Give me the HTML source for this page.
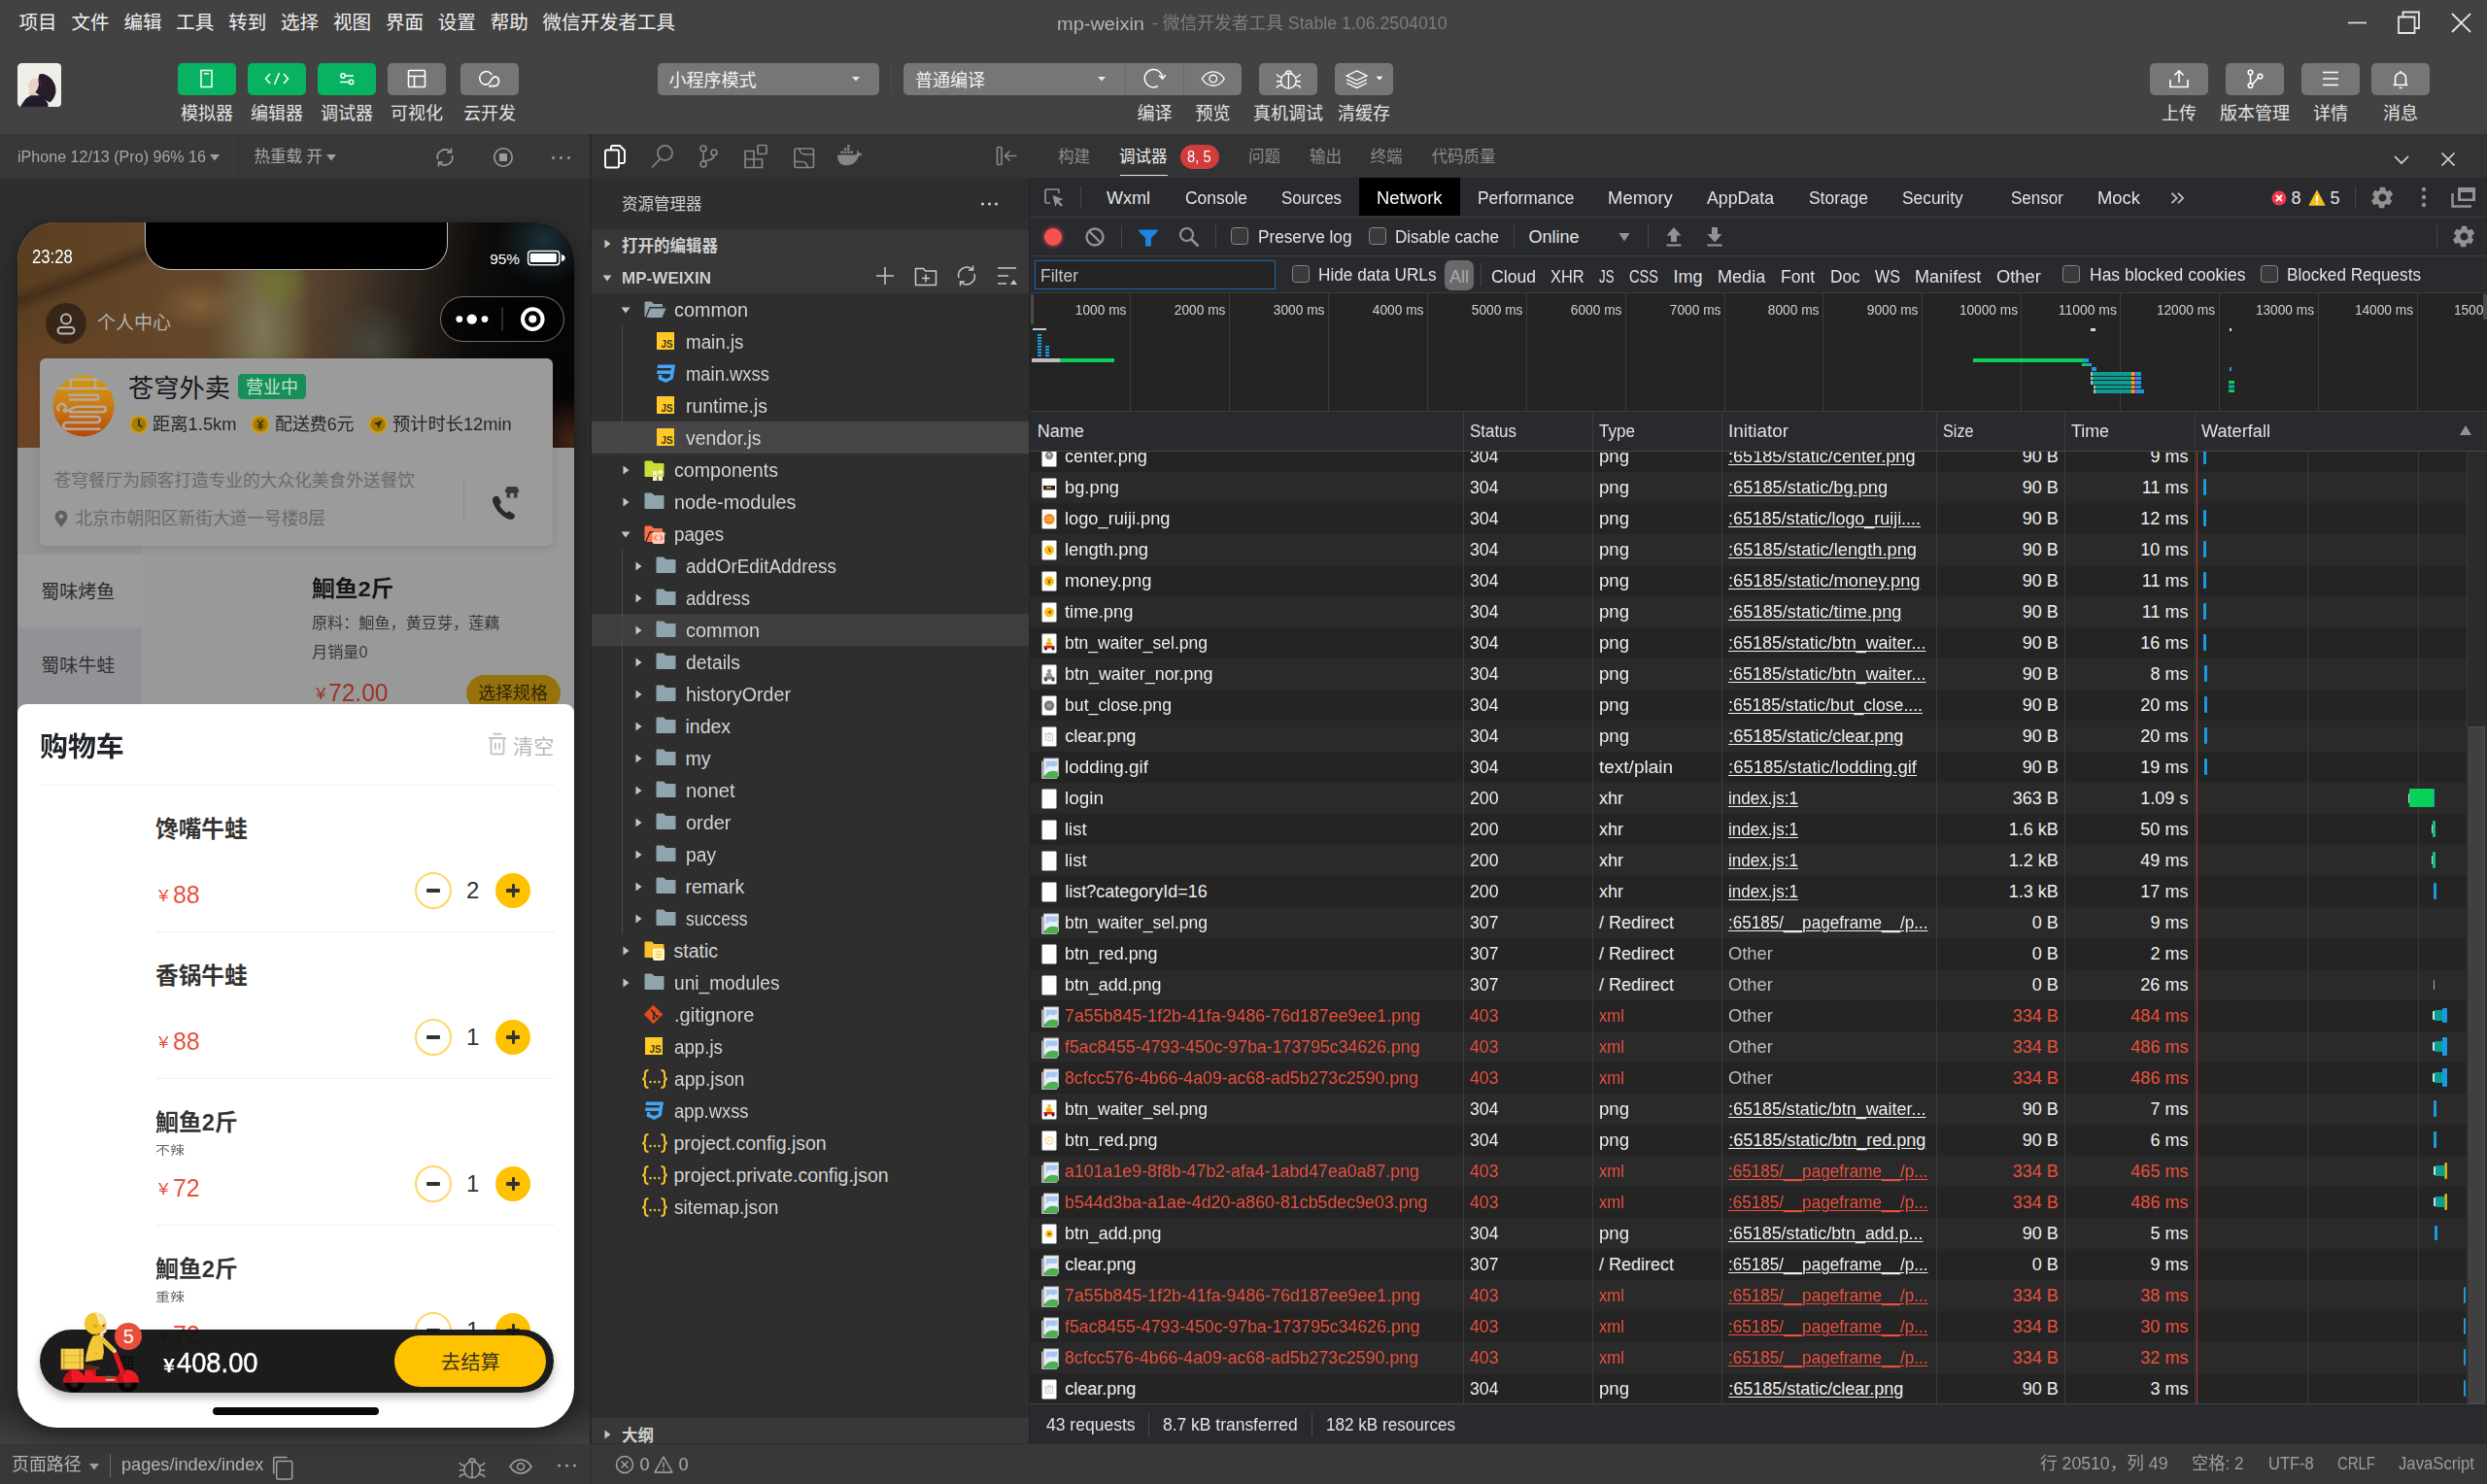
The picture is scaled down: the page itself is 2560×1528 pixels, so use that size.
<!DOCTYPE html>
<html lang="zh-CN"><head><meta charset="utf-8"><title>mp-weixin - 微信开发者工具</title>
<style>
html,body{margin:0;padding:0;background:#2e2e2e;}
body{width:2560px;height:1528px;overflow:hidden;font-family:"Liberation Sans","Noto Sans CJK SC",sans-serif;}
#app{position:relative;width:2560px;height:1528px;overflow:hidden;background:#2e2e2e;}
#app div,#app span.t,#app svg{position:absolute;box-sizing:border-box;}
span.t{white-space:pre;display:block;}
.clip{overflow:hidden;}
</style></head><body><div id="app">
<div style="left:0px;top:0px;width:2560px;height:138px;background:#424242;"></div>
<div style="left:0px;top:138px;width:2560px;height:46px;background:#383838;"></div>
<span class="t" style="left:19.60px;top:10.30px;font-size:19.5px;line-height:27px;color:#f0f0f0;">项目</span>
<span class="t" style="left:73.50px;top:10.30px;font-size:19.5px;line-height:27px;color:#f0f0f0;">文件</span>
<span class="t" style="left:127.40px;top:10.30px;font-size:19.5px;line-height:27px;color:#f0f0f0;">编辑</span>
<span class="t" style="left:181.30px;top:10.30px;font-size:19.5px;line-height:27px;color:#f0f0f0;">工具</span>
<span class="t" style="left:235.20px;top:10.30px;font-size:19.5px;line-height:27px;color:#f0f0f0;">转到</span>
<span class="t" style="left:289.10px;top:10.30px;font-size:19.5px;line-height:27px;color:#f0f0f0;">选择</span>
<span class="t" style="left:343.00px;top:10.30px;font-size:19.5px;line-height:27px;color:#f0f0f0;">视图</span>
<span class="t" style="left:396.90px;top:10.30px;font-size:19.5px;line-height:27px;color:#f0f0f0;">界面</span>
<span class="t" style="left:450.80px;top:10.30px;font-size:19.5px;line-height:27px;color:#f0f0f0;">设置</span>
<span class="t" style="left:504.70px;top:10.30px;font-size:19.5px;line-height:27px;color:#f0f0f0;">帮助</span>
<span class="t" style="left:558.60px;top:10.30px;font-size:19.5px;line-height:27px;color:#f0f0f0;">微信开发者工具</span>
<span class="t" style="left:1087.50px;top:11.80px;font-size:18.3px;line-height:26px;color:#b4b4b4;transform:scaleX(1.0936);transform-origin:0 50%;">mp-weixin</span>
<span class="t" style="left:1185.50px;top:12.10px;font-size:18px;line-height:25px;color:#7d7d7d;transform:scaleX(0.9849);transform-origin:0 50%;">- 微信开发者工具 Stable 1.06.2504010</span>
<svg style="left:2414px;top:10px;" width="26" height="26" viewBox="0 0 26 26"><path d="M3 13.5H22" stroke="#e6e6e6" stroke-width="1.6" fill="none"/></svg>
<svg style="left:2464px;top:8px;" width="30" height="30" viewBox="0 0 30 30"><path d="M5 9.5h16.5v16.5H5z M9.5 9V4.5h16.5v16.5H22" stroke="#e6e6e6" stroke-width="1.8" fill="none"/></svg>
<svg style="left:2520px;top:10px;" width="28" height="28" viewBox="0 0 28 28"><path d="M4 4L23 23M23 4L4 23" stroke="#e6e6e6" stroke-width="1.8" fill="none"/></svg>
<svg style="left:18px;top:64.700px" width="45.300" height="45.300" viewBox="0 0 45.300 45.300"><defs><clipPath id="avc"><rect width="45.300" height="45.300" rx="4.600"/></clipPath><filter id="avb" x="-10%" y="-10%" width="120%" height="120%"><feGaussianBlur stdDeviation="0.700"/></filter></defs>
<g clip-path="url(#avc)"><rect width="45.300" height="45.300" fill="#efefe9"/><g filter="url(#avb)">
<path d="M13.500 17.500c2-2 5-2.500 8.500-1l1 8-3 6.500-5 3-2.500-1.500-1-4 0.500-3-1.500-3z" fill="#ecd2ca"/>
<path d="M12.500 30l7 1-1 4-6-0.500z" fill="#e6c9c0"/>
<path d="M22.500 11.500c3-1.500 7 0 10.500 3 4 3.500 6.500 8 6.500 13.500 0 5-2.500 9.500-6 12.500l-4-2-8-6-3-2.500c1.500-2 3-5 3.500-8l-0.500-4.500c0-2 0.500-4.500 1-6z" fill="#251d2b"/>
<path d="M3 45.300c1.500-3.500 4-7 6.500-9.500l4.500-2.500h10c3 2 6 5.500 7.500 9v3z" fill="#211e2c"/>
<path d="M22 17c1.500 2 2.500 5 2 8" stroke="#4a2a3a" stroke-width="1.200" fill="none"/></g></g></svg>
<div style="left:183px;top:65px;width:60px;height:32.5px;background:#07b261;border-radius:5px;"></div>
<svg style="left:183px;top:65px;" width="60" height="32.5" viewBox="0 0 60 32.5"><rect x="24" y="7.5" width="11" height="17" stroke="#fff" fill="none" stroke-width="1.5"/><path d="M27 10.8h5" stroke="#fff" fill="none" stroke-width="1.5"/></svg>
<span class="t" style="left:186.00px;top:104.50px;font-size:18px;line-height:25px;color:#e4e4e4;">模拟器</span>
<div style="left:255px;top:65px;width:60px;height:32.5px;background:#07b261;border-radius:5px;"></div>
<svg style="left:255px;top:65px;" width="60" height="32.5" viewBox="0 0 60 32.5"><path d="M23 11l-4.5 5 4.5 5M37 11l4.500 5-4.5 5M32.500 10l-5 12" stroke="#fff" fill="none" stroke-width="1.5"/></svg>
<span class="t" style="left:258.00px;top:104.50px;font-size:18px;line-height:25px;color:#e4e4e4;">编辑器</span>
<div style="left:327px;top:65px;width:60px;height:32.5px;background:#07b261;border-radius:5px;"></div>
<svg style="left:327px;top:65px;" width="60" height="32.5" viewBox="0 0 60 32.5"><circle cx="26" cy="13" r="2.200" stroke="#fff" fill="none" stroke-width="1.5"/><path d="M28.500 13H37M23 19.500h9" stroke="#fff" fill="none" stroke-width="1.5"/><circle cx="34.5" cy="19.500" r="2.200" stroke="#fff" fill="none" stroke-width="1.5"/></svg>
<span class="t" style="left:330.00px;top:104.50px;font-size:18px;line-height:25px;color:#e4e4e4;">调试器</span>
<div style="left:399px;top:65px;width:60px;height:32.5px;background:#767676;border-radius:5px;"></div>
<svg style="left:399px;top:65px;" width="60" height="32.5" viewBox="0 0 60 32.5"><rect x="21.5" y="7.500" width="17" height="17" rx="1" stroke="#fff" fill="none" stroke-width="1.6"/><path d="M21.500 13.500h17M27.500 13.500v11" stroke="#fff" fill="none" stroke-width="1.6"/></svg>
<span class="t" style="left:402.00px;top:104.50px;font-size:18px;line-height:25px;color:#e4e4e4;">可视化</span>
<div style="left:474px;top:65px;width:60px;height:32.5px;background:#767676;border-radius:5px;"></div>
<svg style="left:474px;top:65px;" width="60" height="32.5" viewBox="0 0 60 32.5"><path d="M32.300 12a6.700 6.700 0 1 0-4.800 10c3.500-1 4-7.500 8-8.100a4.900 4.900 0 0 1-0.500 9.700H29" stroke="#fff" fill="none" stroke-width="1.6"/></svg>
<span class="t" style="left:477.00px;top:104.50px;font-size:18px;line-height:25px;color:#e4e4e4;">云开发</span>
<div style="left:677px;top:65px;width:228px;height:32.5px;background:#767676;border-radius:5px;"></div>
<span class="t" style="left:688.50px;top:70.50px;font-size:18px;line-height:25px;color:#f2f2f2;">小程序模式</span>
<svg style="left:875px;top:76px;" width="12" height="10" viewBox="0 0 12 10"><path d="M2 3h8l-4 4.500z" fill="#e8e8e8"/></svg>
<div style="left:917px;top:66px;width:1px;height:31px;background:#505050;"></div>
<div style="left:930px;top:65px;width:348px;height:32.5px;background:#767676;border-radius:5px;"></div>
<span class="t" style="left:942.00px;top:70.50px;font-size:18px;line-height:25px;color:#f2f2f2;">普通编译</span>
<svg style="left:1128px;top:76px;" width="12" height="10" viewBox="0 0 12 10"><path d="M2 3h8l-4 4.500z" fill="#e8e8e8"/></svg>
<div style="left:1158px;top:65px;width:1px;height:32.5px;background:#686868;"></div>
<div style="left:1218px;top:65px;width:1px;height:32.5px;background:#686868;"></div>
<svg style="left:1159px;top:65px;" width="59" height="32.5" viewBox="0 0 59 32.5"><path d="M33 23.700a9.200 9.200 0 1 1 4.600-8.700" stroke="#fff" stroke-width="1.350" fill="none"/><path d="M34 12.500l3.700 3.700 3-4.200" stroke="#fff" stroke-width="1.350" fill="none"/></svg>
<svg style="left:1219px;top:65px;" width="59" height="32.5" viewBox="0 0 59 32.5"><path d="M18.300 16c3-5 7-7.200 11.500-7.200s8.500 2.200 11.500 7.200c-3 5-7 7.200-11.500 7.200s-8.500-2.200-11.500-7.200z" stroke="#fff" stroke-width="1.350" fill="none"/><circle cx="29.800" cy="16" r="3.800" stroke="#fff" stroke-width="1.350" fill="none"/></svg>
<span class="t" style="left:1170.50px;top:104.50px;font-size:18px;line-height:25px;color:#e4e4e4;">编译</span>
<span class="t" style="left:1230.50px;top:104.50px;font-size:18px;line-height:25px;color:#e4e4e4;">预览</span>
<div style="left:1296px;top:65px;width:60px;height:32.5px;background:#767676;border-radius:5px;"></div>
<svg style="left:1296px;top:65px;" width="60" height="32.5" viewBox="0 0 60 32.5"><circle cx="30.400" cy="18.300" r="7.800" stroke="#fff" fill="none" stroke-width="1.350"/><path d="M27.400 10.800a3 3 0 0 1 6 0M30.400 10.800v15.300M22.900 14.600l-3.100-1.300-1.800-1.900M22.500 18.700H18M23.400 22.600l-3.600 0.700-1.800 2.200M37.900 14.600l3.100-1.300 1.800-1.900M38.300 18.700h4.500M37.400 22.600l3.600 0.700 1.800 2.200" stroke="#fff" fill="none" stroke-width="1.350"/></svg>
<span class="t" style="left:1290.00px;top:104.50px;font-size:18px;line-height:25px;color:#e4e4e4;">真机调试</span>
<div style="left:1374px;top:65px;width:60px;height:32.5px;background:#767676;border-radius:5px;"></div>
<svg style="left:1374px;top:65px;" width="60" height="32.5" viewBox="0 0 60 32.5"><path d="M22.600 7.900l10.400 5-10.400 4.900-10.400-4.900z" stroke="#fff" fill="none" stroke-width="1.350"/><path d="M12.200 16.900l10.400 4.900 10.400-4.900M12.200 20.500l10.400 4.900 10.400-4.900" stroke="#fff" fill="none" stroke-width="1.350"/><path d="M42.500 13.700h7l-3.500 3.800z" fill="#fff"/></svg>
<span class="t" style="left:1377.00px;top:104.50px;font-size:18px;line-height:25px;color:#e4e4e4;">清缓存</span>
<div style="left:2213px;top:65px;width:60px;height:32.5px;background:#767676;border-radius:5px;"></div>
<svg style="left:2213px;top:65px;" width="60" height="32.5" viewBox="0 0 60 32.5"><path d="M21 17v7.500h18V17M30 20V8.500M25.500 12.500l4.500-4.500 4.500 4.500" stroke="#fff" fill="none" stroke-width="1.6"/></svg>
<span class="t" style="left:2225.00px;top:104.50px;font-size:18px;line-height:25px;color:#e4e4e4;">上传</span>
<div style="left:2291px;top:65px;width:60px;height:32.5px;background:#767676;border-radius:5px;"></div>
<svg style="left:2291px;top:65px;" width="60" height="32.5" viewBox="0 0 60 32.5"><circle cx="25.500" cy="9.500" r="2.300" stroke="#fff" fill="none" stroke-width="1.6"/><circle cx="25.500" cy="23" r="2.300" stroke="#fff" fill="none" stroke-width="1.6"/><circle cx="35.500" cy="13.500" r="2.300" stroke="#fff" fill="none" stroke-width="1.6"/><path d="M25.500 12v8.500M27.500 21.700l6-6.700" stroke="#fff" fill="none" stroke-width="1.6"/></svg>
<span class="t" style="left:2285.00px;top:104.50px;font-size:18px;line-height:25px;color:#e4e4e4;">版本管理</span>
<div style="left:2369px;top:65px;width:60px;height:32.5px;background:#767676;border-radius:5px;"></div>
<svg style="left:2369px;top:65px;" width="60" height="32.5" viewBox="0 0 60 32.5"><path d="M22 9.500h16M22 16h16M22 22.500h16" stroke="#fff" fill="none" stroke-width="1.6"/></svg>
<span class="t" style="left:2381.00px;top:104.50px;font-size:18px;line-height:25px;color:#e4e4e4;">详情</span>
<div style="left:2441px;top:65px;width:60px;height:32.5px;background:#767676;border-radius:5px;"></div>
<svg style="left:2441px;top:65px;" width="60" height="32.5" viewBox="0 0 60 32.5"><path d="M22.500 22.500h15M24.500 22.500v-7a5.500 5.500 0 0 1 11 0v7M30 8v2M28.500 25.500h3" stroke="#fff" fill="none" stroke-width="1.6"/></svg>
<span class="t" style="left:2453.00px;top:104.50px;font-size:18px;line-height:25px;color:#e4e4e4;">消息</span>
<span class="t" style="left:18.00px;top:149.50px;font-size:16.5px;line-height:23px;color:#a8a8a8;transform:scaleX(0.9746);transform-origin:0 50%;">iPhone 12/13 (Pro) 96% 16</span>
<svg style="left:215.3px;top:157px;" width="12" height="10" viewBox="0 0 12 10"><path d="M1 2h10l-5 6.500z" fill="#a0a0a0"/></svg>
<div style="left:245px;top:138px;width:1px;height:46px;background:#333;"></div>
<div style="left:362px;top:138px;width:1px;height:46px;background:#333;"></div>
<span class="t" style="left:261.50px;top:149.50px;font-size:16.5px;line-height:23px;color:#a8a8a8;">热重载 开</span>
<svg style="left:335px;top:157px;" width="12" height="10" viewBox="0 0 12 10"><path d="M1 2h10l-5 6.500z" fill="#a0a0a0"/></svg>
<svg style="left:446px;top:150px;" width="24" height="24" viewBox="0 0 24 24"><path d="M4.500 14a8 8 0 0 1 13.500-7.500M19.500 10a8 8 0 0 1-13.500 7.500" stroke="#9c9c9c" fill="none" stroke-width="1.6"/><path d="M18.500 2.500v4.500h-4.500M5.500 21.500v-4.500h4.500" stroke="#9c9c9c" fill="none" stroke-width="1.6"/></svg>
<svg style="left:506px;top:150px;" width="24" height="24" viewBox="0 0 24 24"><circle cx="12" cy="12" r="9.200" stroke="#9c9c9c" fill="none" stroke-width="1.6"/><rect x="8" y="8" width="8" height="8" rx="1" fill="#9c9c9c"/></svg>
<svg style="left:565px;top:150px;" width="26" height="24" viewBox="0 0 26 24"><circle cx="4.500" cy="12.500" r="1.500" fill="#9c9c9c"/><circle cx="12.500" cy="12.500" r="1.500" fill="#9c9c9c"/><circle cx="20.500" cy="12.500" r="1.500" fill="#9c9c9c"/></svg>
<div style="left:607px;top:138px;width:1.5px;height:46px;background:#2b2b2b;"></div>
<div style="left:0px;top:184px;width:607px;height:1302px;background:#2e2e2e;"></div>
<div style="left:0px;top:1486.5px;width:2560px;height:41.5px;background:#383838;"></div>
<div style="left:0px;top:1446px;width:607px;height:40.5px;background:linear-gradient(to bottom,rgba(64,64,64,0),#3f3f3f);"></div>
<div class="clip" style="left:18.4px;top:229px;width:573px;height:1241px;border-radius:39px 39px 41px 41px;background:#999999;box-shadow:0 6px 22px rgba(0,0,0,.45);">
<div style="left:0px;top:-0.6px;width:573px;height:232.6px;background:linear-gradient(159deg, rgba(48,32,19,0) 15%, rgba(48,32,19,.5) 18.3%, rgba(48,32,19,0) 21.500%),radial-gradient(ellipse 48px 48px at 542px 20px, rgba(30,50,60,.95), rgba(30,50,60,0) 100%),radial-gradient(ellipse 34px 30px at 268px 64px, rgba(112,118,46,.9), rgba(112,118,46,0) 100%),radial-gradient(ellipse 52px 125px at 252px 112px, rgba(126,120,88,.98), rgba(126,120,88,0) 100%),radial-gradient(ellipse 46px 26px at 188px 86px, rgba(142,110,64,.6), rgba(142,110,64,0) 100%),radial-gradient(ellipse 100px 36px at 270px 228px, rgba(54,70,68,.95), rgba(54,70,68,0) 100%),radial-gradient(ellipse 46px 46px at 366px 128px, rgba(76,80,72,.7), rgba(76,80,72,0) 100%),radial-gradient(ellipse 120px 95px at 40px 195px, rgba(122,72,40,.75), rgba(122,72,40,0) 100%),radial-gradient(ellipse 45px 45px at 570px 226px, rgba(72,38,22,.95), rgba(72,38,22,0) 100%),linear-gradient(97deg,#5a3e20 0%,#65472a 30%,#5e4a30 48%,#4c3b2a 57%,#2e2620 67%,#100e0c 79%,#070707 88%,#050505 100%);"></div>
<div style="left:0px;top:232px;width:573px;height:300px;background:#999999;"></div>
<div style="left:0px;top:232px;width:128px;height:110px;background:#949497;"></div>
<div style="left:0px;top:341.6px;width:128px;height:75.4px;background:#9b9b9b;"></div>
<div style="left:0px;top:417px;width:128px;height:90px;background:#929296;"></div>
<span class="t" style="left:23.90px;top:367.20px;font-size:19px;line-height:27px;color:#2b2b2b;">蜀味烤鱼</span>
<span class="t" style="left:23.90px;top:443.40px;font-size:19px;line-height:27px;color:#333336;">蜀味牛蛙</span>
<span class="t" style="left:303.10px;top:362.20px;font-size:22.5px;line-height:31px;color:#161616;font-weight:700;transform:scaleX(1.0560);transform-origin:0 50%;">鮰鱼2斤</span>
<span class="t" style="left:303.10px;top:401.70px;font-size:16px;line-height:22px;color:#383838;transform:scaleX(1.0077);transform-origin:0 50%;">原料：鮰鱼，黄豆芽，莲藕</span>
<span class="t" style="left:303.10px;top:431.90px;font-size:16px;line-height:22px;color:#383838;transform:scaleX(1.0104);transform-origin:0 50%;">月销量0</span>
<span class="t" style="left:306.60px;top:474.20px;font-size:17px;line-height:24px;color:#9c3226;transform:scaleX(1.1089);transform-origin:0 50%;">¥</span>
<span class="t" style="left:320.10px;top:465.50px;font-size:26px;line-height:36px;color:#9c3226;transform:scaleX(0.9450);transform-origin:0 50%;">72.00</span>
<div style="left:461.6px;top:466px;width:97px;height:37px;background:#96720a;border-radius:18.500px;"></div>
<span class="t" style="left:474.10px;top:472.70px;font-size:18px;line-height:25px;color:#2e2407;transform:scaleX(0.9931);transform-origin:50% 50%;">选择规格</span>
<div style="left:23.1px;top:140.4px;width:527.2px;height:192.3px;background:#9b9b9b;border-radius:6px;box-shadow:0 2px 8px rgba(0,0,0,.12);"></div>
<svg style="left:35.3px;top:157.4px;" width="64" height="64" viewBox="0 0 64 64"><defs><linearGradient id="lg" x1="0" y1="0" x2="0" y2="1"><stop offset="0" stop-color="#d09a12"/><stop offset="0.450" stop-color="#cd7f12"/><stop offset="1" stop-color="#b6480a"/></linearGradient><clipPath id="lc"><circle cx="32" cy="32" r="31.500"/></clipPath></defs>
<circle cx="32" cy="32" r="31.500" fill="url(#lg)"/>
<g clip-path="url(#lc)" stroke="#b3aaa0" stroke-width="2.500" fill="none" stroke-linecap="round">
<path d="M12.300 4.800H50.900M5 14.100H58M18.900 2.100V14.100M44.200 2.100V14.100"/>
<path d="M17.100 20.800H45a2.400 2.400 0 0 1 0 4.800H18.300"/>
<path d="M6.500 36.500c-3.500-4 2-8.500 6-5.500 2.500 2 1.500 5-1 5.500M12 37.500c5 1 8-4.700 14-4.700H52a2.700 2.700 0 0 1 0 5.400H18.300"/>
<path d="M18.300 43.100H46a3 3 0 0 1 0 6H14.500a3.300 3.300 0 0 0 0 6.600H48.400"/></g></svg>
<span class="t" style="left:113.60px;top:153.20px;font-size:26.3px;line-height:37px;color:#15171c;">苍穹外卖</span>
<div style="left:226.9px;top:156px;width:69.4px;height:26px;background:#178f58;border-radius:4.500px;"></div>
<span class="t" style="left:234.60px;top:158.20px;font-size:18px;line-height:25px;color:#c3e2d2;">营业中</span>
<svg style="left:114.6px;top:198px;" width="20" height="20" viewBox="0 0 20 20"><circle cx="10" cy="10" r="9.600" fill="#cf9b16"/><circle cx="10" cy="10" r="7.600" fill="#a27c07"/><path d="M10 5.500v5l3 2" stroke="#4a3508" stroke-width="2" fill="none" stroke-linecap="round"/></svg>
<span class="t" style="left:138.60px;top:195.70px;font-size:18px;line-height:25px;color:#262626;transform:scaleX(1.0173);transform-origin:0 50%;">距离1.5km</span>
<svg style="left:240.1px;top:198px;" width="20" height="20" viewBox="0 0 20 20"><circle cx="10" cy="10" r="9.600" fill="#cf9b16"/><circle cx="10" cy="10" r="7.600" fill="#a27c07"/><path d="M7 5.500l3 4 3-4M10 9.500v5.500M7.200 10.500h5.600M7.200 12.800h5.600" stroke="#4a3508" stroke-width="1.500" fill="none"/></svg>
<span class="t" style="left:264.60px;top:195.70px;font-size:18px;line-height:25px;color:#262626;transform:scaleX(0.9937);transform-origin:0 50%;">配送费6元</span>
<svg style="left:360.6px;top:198px;" width="20" height="20" viewBox="0 0 20 20"><circle cx="10" cy="10" r="9.600" fill="#cf9b16"/><circle cx="10" cy="10" r="7.600" fill="#a27c07"/><path d="M14.500 5.500L5.500 9.300l4 1.200 1.200 4z" fill="#3a2906"/></svg>
<span class="t" style="left:385.40px;top:195.70px;font-size:18px;line-height:25px;color:#262626;transform:scaleX(1.0130);transform-origin:0 50%;">预计时长12min</span>
<div style="left:35.2px;top:240px;width:503px;height:1px;border-top:1px dashed #8f8f8f;"></div>
<span class="t" style="left:37.10px;top:253.70px;font-size:17.7px;line-height:25px;color:#6a6a6a;">苍穹餐厅为顾客打造专业的大众化美食外送餐饮</span>
<svg style="left:36.6px;top:295px;" width="16" height="20" viewBox="0 0 16 20"><path d="M8 1.500a6.300 6.300 0 0 1 6.300 6.300c0 4-4 8-6.300 11-2.300-3-6.300-7-6.300-11A6.300 6.300 0 0 1 8 1.500z" fill="#5e5e5e"/><circle cx="8" cy="7.800" r="2.300" fill="#9b9b9b"/></svg>
<span class="t" style="left:59.00px;top:292.50px;font-size:17.7px;line-height:25px;color:#6a6a6a;">北京市朝阳区新街大道一号楼8层</span>
<div style="left:458.6px;top:261px;width:1px;height:48.5px;background:#8d8d8d;"></div>
<svg style="left:485.6px;top:270px;" width="34" height="36" viewBox="0 0 34 36"><path d="M3.500 13.500c2-2 4.500-2.500 5.500-1l2.500 4.500c0.600 1.200 0 2.500-1.500 3.500 1.500 3.500 4 6.500 7.500 8.500 1-1.500 2.500-2 3.500-1.300l4.300 2.800c1.300 1 0.800 3.300-1.300 5-3 1.500-8.500-1-13.500-6S1.500 16.500 3.500 13.500z" fill="#2b2b2b"/><path d="M16 5.500l2-3.500h10l2 3.500v2.500h-1.500v5.500h-11V8h-1.500z" fill="#3a3a3a"/><rect x="21" y="9" width="4" height="4.500" fill="#9b9b9b"/></svg>
<div style="left:28.6px;top:83px;width:42px;height:42px;background:rgba(30,22,18,.62);border-radius:21px;"></div>
<svg style="left:34.6px;top:89px;" width="30" height="30" viewBox="0 0 30 30"><circle cx="15" cy="10.500" r="5" stroke="#b9b5b1" stroke-width="2" fill="none"/><rect x="6.500" y="19" width="17" height="6.500" rx="3.200" stroke="#b9b5b1" stroke-width="2" fill="none"/></svg>
<span class="t" style="left:81.60px;top:90.40px;font-size:19px;line-height:27px;color:#b4b1ad;">个人中心</span>
<div style="left:0px;top:495.7px;width:573px;height:760px;background:#ffffff;border-radius:9px 9px 0 0;"></div>
<span class="t" style="left:22.40px;top:520.20px;font-size:28.8px;line-height:40px;color:#20232a;font-weight:700;transform:scaleX(1.0046);transform-origin:0 50%;">购物车</span>
<svg style="left:481.6px;top:524px;" width="24" height="26" viewBox="0 0 24 26"><path d="M7.500 2.800h9M3 7h18M5.500 7v15a1.500 1.500 0 0 0 1.500 1.500h10a1.500 1.500 0 0 0 1.500-1.500V7M10 12v6.500M14 12v6.500" stroke="#c4c4c4" stroke-width="1.900" fill="none"/></svg>
<span class="t" style="left:509.90px;top:525.20px;font-size:21px;line-height:29px;color:#b8b8b8;transform:scaleX(1.0071);transform-origin:0 50%;">清空</span>
<div style="left:22.4px;top:578.8px;width:530px;height:1px;background:#efeff5;"></div>
<span class="t" style="left:141.60px;top:609.40px;font-size:23.7px;line-height:33px;color:#333333;font-weight:700;">馋嘴牛蛙</span>
<span class="t" style="left:144.60px;top:682.20px;font-size:17px;line-height:24px;color:#e94e3c;transform:scaleX(1.1089);transform-origin:0 50%;">¥</span>
<span class="t" style="left:159.60px;top:673.70px;font-size:26px;line-height:36px;color:#e94e3c;transform:scaleX(0.9578);transform-origin:0 50%;">88</span>
<div style="left:408.6px;top:669px;width:38px;height:38px;background:#ffffff;border-radius:19px;border:2.500px solid #fdd766;"></div>
<div style="left:420.3px;top:686.4px;width:14.6px;height:3.2px;background:#333;border-radius:1px;"></div>
<span class="t" style="left:461.72px;top:670.50px;font-size:24px;line-height:34px;color:#333333;">2</span>
<div style="left:491.9px;top:670px;width:36px;height:36px;background:#ffc200;border-radius:18px;"></div>
<div style="left:502.9px;top:686.4px;width:14px;height:3.2px;background:#333;border-radius:1px;"></div>
<div style="left:508.3px;top:681px;width:3.2px;height:14px;background:#333;border-radius:1px;"></div>
<div style="left:141.6px;top:730.3px;width:410.6px;height:1px;background:#efeff5;"></div>
<span class="t" style="left:141.60px;top:760.40px;font-size:23.7px;line-height:33px;color:#333333;font-weight:700;">香锅牛蛙</span>
<span class="t" style="left:144.60px;top:833.20px;font-size:17px;line-height:24px;color:#e94e3c;transform:scaleX(1.1089);transform-origin:0 50%;">¥</span>
<span class="t" style="left:159.60px;top:824.70px;font-size:26px;line-height:36px;color:#e94e3c;transform:scaleX(0.9578);transform-origin:0 50%;">88</span>
<div style="left:408.6px;top:820px;width:38px;height:38px;background:#ffffff;border-radius:19px;border:2.500px solid #fdd766;"></div>
<div style="left:420.3px;top:837.4px;width:14.6px;height:3.2px;background:#333;border-radius:1px;"></div>
<span class="t" style="left:461.72px;top:821.50px;font-size:24px;line-height:34px;color:#333333;">1</span>
<div style="left:491.9px;top:821px;width:36px;height:36px;background:#ffc200;border-radius:18px;"></div>
<div style="left:502.9px;top:837.4px;width:14px;height:3.2px;background:#333;border-radius:1px;"></div>
<div style="left:508.3px;top:832px;width:3.2px;height:14px;background:#333;border-radius:1px;"></div>
<div style="left:141.6px;top:881.3px;width:410.6px;height:1px;background:#efeff5;"></div>
<span class="t" style="left:141.60px;top:911.40px;font-size:23.7px;line-height:33px;color:#333333;font-weight:700;transform:scaleX(1.0089);transform-origin:0 50%;">鮰鱼2斤</span>
<span class="t" style="left:141.60px;top:947.70px;font-size:12px;line-height:17px;color:#666666;transform:scaleX(1.2492);transform-origin:0 50%;">不辣</span>
<span class="t" style="left:144.60px;top:984.20px;font-size:17px;line-height:24px;color:#e94e3c;transform:scaleX(1.1089);transform-origin:0 50%;">¥</span>
<span class="t" style="left:159.60px;top:975.70px;font-size:26px;line-height:36px;color:#e94e3c;transform:scaleX(0.9578);transform-origin:0 50%;">72</span>
<div style="left:408.6px;top:971px;width:38px;height:38px;background:#ffffff;border-radius:19px;border:2.500px solid #fdd766;"></div>
<div style="left:420.3px;top:988.4px;width:14.6px;height:3.2px;background:#333;border-radius:1px;"></div>
<span class="t" style="left:461.72px;top:972.50px;font-size:24px;line-height:34px;color:#333333;">1</span>
<div style="left:491.9px;top:972px;width:36px;height:36px;background:#ffc200;border-radius:18px;"></div>
<div style="left:502.9px;top:988.4px;width:14px;height:3.2px;background:#333;border-radius:1px;"></div>
<div style="left:508.3px;top:983px;width:3.2px;height:14px;background:#333;border-radius:1px;"></div>
<div style="left:141.6px;top:1032.3px;width:410.6px;height:1px;background:#efeff5;"></div>
<span class="t" style="left:141.60px;top:1062.40px;font-size:23.7px;line-height:33px;color:#333333;font-weight:700;transform:scaleX(1.0089);transform-origin:0 50%;">鮰鱼2斤</span>
<span class="t" style="left:141.60px;top:1098.70px;font-size:12px;line-height:17px;color:#666666;transform:scaleX(1.2492);transform-origin:0 50%;">重辣</span>
<span class="t" style="left:144.60px;top:1135.20px;font-size:17px;line-height:24px;color:#e94e3c;transform:scaleX(1.1089);transform-origin:0 50%;">¥</span>
<span class="t" style="left:159.60px;top:1126.70px;font-size:26px;line-height:36px;color:#e94e3c;transform:scaleX(0.9578);transform-origin:0 50%;">72</span>
<div style="left:408.6px;top:1122px;width:38px;height:38px;background:#ffffff;border-radius:19px;border:2.500px solid #fdd766;"></div>
<div style="left:420.3px;top:1139.4px;width:14.6px;height:3.2px;background:#333;border-radius:1px;"></div>
<span class="t" style="left:461.72px;top:1123.50px;font-size:24px;line-height:34px;color:#333333;">1</span>
<div style="left:491.9px;top:1123px;width:36px;height:36px;background:#ffc200;border-radius:18px;"></div>
<div style="left:502.9px;top:1139.4px;width:14px;height:3.2px;background:#333;border-radius:1px;"></div>
<div style="left:508.3px;top:1134px;width:3.2px;height:14px;background:#333;border-radius:1px;"></div>
<div style="left:22.6px;top:1139.5px;width:528.7px;height:65.4px;background:rgba(18,18,18,.955);border-radius:33px;box-shadow:0 5px 10px rgba(0,0,0,.28);"></div>
<svg style="left:41.6px;top:1119px;" width="88" height="88" viewBox="0 0 88 88"><rect x="2.700" y="40.700" width="23.400" height="21.300" fill="#f5d24c"/><path d="M2.700 47.800h23.400M2.700 54.800h23.400" stroke="#d8ae2a" stroke-width="1"/><path d="M5.800 40.700v21.300M22.300 40.700v21.300" stroke="#c99a20" stroke-width="1.300"/><path d="M2.700 62h23.400" stroke="#e0483a" stroke-width="1"/>
<rect x="63.500" y="48.700" width="14" height="13.300" fill="#0c0c0c"/><path d="M63.500 52h14M63.500 55.500h14M63.500 59h14M67 48.700v13.300M70.500 48.700v13.300M74 48.700v13.300" stroke="#262626" stroke-width="0.700"/>
<circle cx="16.700" cy="75.200" r="10.300" fill="#050505"/><circle cx="16.700" cy="76.500" r="4" fill="#222"/>
<circle cx="71.500" cy="75.200" r="10.300" fill="#050505"/><circle cx="71.500" cy="76.500" r="4" fill="#222"/>
<path d="M5 75.400a11.700 13 0 0 1 23.400 0z" fill="#ed1c24"/><path d="M5 75.400a11.700 13 0 0 1 8.200-12.400l1 12.400z" fill="#c3141b"/>
<path d="M59.800 75.400a11.700 13 0 0 1 23.400 0z" fill="#ed1c24"/><path d="M59.800 75.400a11.700 13 0 0 1 5-10.700l3 10.700z" fill="#c3141b"/>
<path d="M27.500 62.500h11.500v6.500h21l2 6.400H26z" fill="#ed1c24"/><path d="M34.500 62.500h4.500v6.500h-3z" fill="#c3141b"/>
<path d="M56.300 45.800l4.300-1.800 8.800 21.500-5 2.500z" fill="#e3171f"/><path d="M60.600 44l8.800 21.500-2 1z" fill="#b91219"/>
<path d="M26.700 57.600h16.300l-1 4.400H27.700z" fill="#5b2d1b"/>
<path d="M32 53l13-2.200 7.300 4.700 3 12.700-3.600 1-3.500-9.500-13.700-1.700z" fill="#1b1b1b"/>
<path d="M48.800 69.300c2-1.200 5-1 7 0.300l2.300 2.200v1H48.800z" fill="#8a5638"/><path d="M48.600 72.300h9.600v1.300h-9.600z" fill="#f1e7de"/>
<path d="M35.400 28c3-1.800 7-2 10-0.600l1.600 16.800-1.500 7.300-17.500 2.700c0.800-9 3.400-19 7.400-26.200z" fill="#f2c838"/>
<path d="M41.500 30.600l3-3.800 14.900 14.600-2.400 3.900z" fill="#f4cd40"/><path d="M43.800 29.500l13.900 13.400" stroke="#c99d1c" stroke-width="1"/><path d="M41.500 30.600l15.500 14.700" stroke="#d9ad24" stroke-width="0.700"/>
<circle cx="58.200" cy="43.300" r="1.700" fill="#f6d9c4"/><path d="M38 46l3-1" stroke="#c79a1c" stroke-width="0.800"/>
<ellipse cx="46.300" cy="19.300" rx="4" ry="5.800" fill="#fbe4d5"/><path d="M42.500 23.500h4v4.500h-4z" fill="#f6d6c2"/>
<circle cx="38.100" cy="14.700" r="11.300" fill="#f4c52c"/><path d="M38.100 3.400a11.300 11.300 0 0 1 11.200 9.800l-6.800 3.300z" fill="#f4e3a3"/><path d="M40.500 3.700l3.300 12" stroke="#fff6d8" stroke-width="0.900"/>
<path d="M33 24.500c3 1.800 7 1.600 9.800-0.500" stroke="#dba81e" stroke-width="1" fill="none"/>
<circle cx="38.100" cy="17.200" r="2.300" fill="#e9a81c"/><circle cx="46.800" cy="17.200" r="0.900" fill="#3b2a2a"/><circle cx="48.300" cy="20.300" r="1.300" fill="#f7b8ad" opacity=".7"/></svg>
<div style="left:99.6px;top:1132.5px;width:28.5px;height:28.5px;background:#e94e3c;border-radius:14.500px;"></div>
<span class="t" style="left:108.24px;top:1132.70px;font-size:20px;line-height:28px;color:#ffffff;">5</span>
<span class="t" style="left:150.10px;top:1161.70px;font-size:21px;line-height:29px;color:#ffffff;font-weight:700;transform:scaleX(1.0267);transform-origin:0 50%;">¥</span>
<span class="t" style="left:164.10px;top:1152.70px;font-size:30px;line-height:42px;color:#ffffff;transform:scaleX(0.9099);transform-origin:0 50%;-webkit-text-stroke:0.400px #fff;">408.00</span>
<div style="left:387.5px;top:1145.5px;width:156.3px;height:53.5px;background:#ffc200;border-radius:27px;"></div>
<span class="t" style="left:435.47px;top:1160.20px;font-size:20.3px;line-height:28px;color:#3a3320;">去结算</span>
<div style="left:200.6px;top:1220.3px;width:170.7px;height:8.2px;background:#0a0a0a;border-radius:4.100px;"></div>
<div style="left:131px;top:-2.6px;width:311.7px;height:51.2px;background:#000000;border-radius:0 0 27px 27px;border:1px solid rgba(255,255,255,.75);border-top:none;"></div>
<span class="t" style="left:14.20px;top:21.80px;font-size:19.5px;line-height:27px;color:#ffffff;transform:scaleX(0.8563);transform-origin:0 50%;">23:28</span>
<span class="t" style="left:485.90px;top:27.00px;font-size:15.3px;line-height:21px;color:#ffffff;">95%</span>
<svg style="left:523.6px;top:28px;" width="42" height="18" viewBox="0 0 42 18"><rect x="1.600" y="1.600" width="32.200" height="14.100" rx="3.200" stroke="#f2f2f2" stroke-width="1.500" fill="none"/><rect x="3.800" y="4.100" width="27" height="9" rx="1.300" fill="#fff"/><path d="M35.900 5v7.200c2.300-0.300 3.800-1.600 3.800-3.600s-1.500-3.300-3.800-3.600z" fill="#fff"/></svg>
<div style="left:434.6px;top:75.5px;width:128px;height:47.2px;background:rgba(0,0,0,.62);border-radius:24px;border:1px solid rgba(255,255,255,.42);"></div>
<svg style="left:434.6px;top:75.5px;" width="128" height="47.2" viewBox="0 0 128 47.2"><circle cx="19.800" cy="23.600" r="3.400" fill="#fff"/><circle cx="32.700" cy="23.600" r="5.200" fill="#fff"/><circle cx="46" cy="23.600" r="3.400" fill="#fff"/><path d="M64 11.500v24" stroke="rgba(255,255,255,.35)" stroke-width="1"/><circle cx="95.300" cy="23.600" r="10.300" stroke="#fff" stroke-width="4" fill="none"/><circle cx="95.300" cy="23.600" r="4" fill="#fff"/></svg>
</div>
<span class="t" style="left:12.00px;top:1496.00px;font-size:18px;line-height:25px;color:#b4b4b4;transform:scaleX(0.9931);transform-origin:0 50%;">页面路径</span>
<svg style="left:91px;top:1504.5px;" width="12" height="10" viewBox="0 0 12 10"><path d="M1 2h10l-5 6.500z" fill="#a0a0a0"/></svg>
<div style="left:113px;top:1497px;width:1px;height:24px;background:#6a6a6a;"></div>
<span class="t" style="left:125.40px;top:1496.00px;font-size:18px;line-height:25px;color:#b4b4b4;transform:scaleX(1.0082);transform-origin:0 50%;">pages/index/index</span>
<svg style="left:280px;top:1498px;" width="24" height="28" viewBox="0 0 24 28"><rect x="4.700" y="6.500" width="16" height="18.500" rx="1.500" stroke="#a0a0a0" stroke-width="1.500" fill="none"/><path d="M1.700 19.500V4a1.500 1.500 0 0 1 1.500-1.500H15.500" stroke="#a0a0a0" stroke-width="1.500" fill="none"/></svg>
<svg style="left:472px;top:1497px;" width="28" height="30" viewBox="0 0 28 30"><circle cx="14" cy="16.300" r="8.300" stroke="#a0a0a0" fill="none" stroke-width="1.500"/><path d="M10.800 8.300a3.200 3.200 0 0 1 6.400 0M14 8.300v16.300M6 12.300l-3.300-1.400-1.900-2M5.600 16.700H0.800M6.500 20.900l-3.800 0.800-1.900 2.300M22 12.300l3.300-1.400 1.900-2M22.400 16.700h4.800M21.500 20.900l3.800 0.800 1.900 2.300" stroke="#a0a0a0" fill="none" stroke-width="1.500"/></svg>
<svg style="left:523px;top:1497px;" width="26" height="26" viewBox="0 0 26 26"><path d="M2 13c3-5 6.500-7 11-7s8 2 11 7c-3 5-6.500 7-11 7s-8-2-11-7z" stroke="#a0a0a0" fill="none" stroke-width="1.500"/><circle cx="13" cy="13" r="3.500" stroke="#a0a0a0" fill="none" stroke-width="1.500"/></svg>
<svg style="left:571px;top:1501px;" width="26" height="16" viewBox="0 0 26 16"><circle cx="4.500" cy="8" r="1.500" fill="#a0a0a0"/><circle cx="12.500" cy="8" r="1.500" fill="#a0a0a0"/><circle cx="20.500" cy="8" r="1.500" fill="#a0a0a0"/></svg>
<div style="left:608px;top:1486px;width:1px;height:42px;background:#2e2e2e;"></div>
<svg style="left:632px;top:1497px;" width="22" height="22" viewBox="0 0 22 22"><circle cx="11" cy="11" r="8.500" stroke="#a8a8a8" stroke-width="1.400" fill="none"/><path d="M7.500 7.500l7 7M14.500 7.500l-7 7" stroke="#a8a8a8" stroke-width="1.400"/></svg>
<span class="t" style="left:658.50px;top:1495.50px;font-size:18px;line-height:25px;color:#a8a8a8;">0</span>
<svg style="left:672px;top:1497px;" width="22" height="22" viewBox="0 0 22 22"><path d="M11 3l9 16H2z" stroke="#a8a8a8" stroke-width="1.400" fill="none" stroke-linejoin="round"/><path d="M11 8.500v5.500M11 15.500v1.800" stroke="#a8a8a8" stroke-width="1.400"/></svg>
<span class="t" style="left:698.50px;top:1495.50px;font-size:18px;line-height:25px;color:#a8a8a8;">0</span>
<span class="t" style="left:2100.00px;top:1495.00px;font-size:18px;line-height:25px;color:#9c9c9c;transform:scaleX(0.9808);transform-origin:0 50%;">行 20510，列 49</span>
<span class="t" style="left:2256.00px;top:1495.00px;font-size:18px;line-height:25px;color:#9c9c9c;transform:scaleX(0.9551);transform-origin:0 50%;">空格: 2</span>
<span class="t" style="left:2334.50px;top:1495.00px;font-size:18px;line-height:25px;color:#9c9c9c;transform:scaleX(0.9176);transform-origin:0 50%;">UTF-8</span>
<span class="t" style="left:2405.80px;top:1495.00px;font-size:18px;line-height:25px;color:#9c9c9c;transform:scaleX(0.8295);transform-origin:0 50%;">CRLF</span>
<span class="t" style="left:2469.20px;top:1495.00px;font-size:18px;line-height:25px;color:#9c9c9c;transform:scaleX(0.9281);transform-origin:0 50%;">JavaScript</span>
<div style="left:609px;top:138px;width:1951px;height:46px;background:#333333;"></div>
<svg style="left:620px;top:146px;" width="28" height="30" viewBox="0 0 28 30"><path d="M9 8.500V5.500a1.500 1.500 0 0 1 1.500-1.500H18l5 5v11.500a1.500 1.500 0 0 1-1.500 1.500H17" stroke="#ffffff" fill="none" stroke-width="1.9"/><path d="M3 10a1.500 1.500 0 0 1 1.500-1.500H15.500a1.500 1.500 0 0 1 1.500 1.500V25a1.500 1.500 0 0 1-1.500 1.500H4.500a1.500 1.500 0 0 1-1.500-1.500z" stroke="#ffffff" fill="none" stroke-width="1.9"/></svg>
<svg style="left:668px;top:146px;" width="28" height="30" viewBox="0 0 28 30"><circle cx="16.500" cy="11.500" r="7.600" stroke="#858585" fill="none" stroke-width="1.7"/><path d="M11.500 17.500L3 26.500" stroke="#858585" fill="none" stroke-width="1.7"/></svg>
<svg style="left:716px;top:146px;" width="28" height="30" viewBox="0 0 28 30"><circle cx="8" cy="7" r="3" stroke="#858585" fill="none" stroke-width="1.7"/><circle cx="8" cy="23" r="3" stroke="#858585" fill="none" stroke-width="1.7"/><circle cx="19" cy="11" r="3" stroke="#858585" fill="none" stroke-width="1.7"/><path d="M8 10v10M19 14c0 4-5 5-10 6" stroke="#858585" fill="none" stroke-width="1.7"/></svg>
<svg style="left:764px;top:146px;" width="28" height="30" viewBox="0 0 28 30"><path d="M3 9.500h9v8.500h8.500v8.500H3zM12 18H3M12 18v8.500" stroke="#858585" fill="none" stroke-width="1.7"/><rect x="16" y="3.500" width="9" height="9" rx="1" stroke="#858585" fill="none" stroke-width="1.7"/></svg>
<svg style="left:814px;top:146px;" width="28" height="30" viewBox="0 0 28 30"><rect x="4" y="7" width="19.500" height="19.500" rx="1.500" stroke="#858585" fill="none" stroke-width="1.7"/><path d="M9 7c0 5 3 6 8 6h6.500M4 20.500h7c4 0 6 2 6 6" stroke="#858585" fill="none" stroke-width="1.7"/></svg>
<svg style="left:860px;top:146px;" width="28" height="30" viewBox="0 0 28 30"><path d="M2 13.500h19.500c1-2 1-3.500 0.300-5 1.500 0.500 2.500 1.800 2.800 3.300 1-0.200 2 0 2.800 0.600-0.800 1.500-2 2.200-3.600 2.300-2 6.500-6.500 9.500-13 9.500-6 0-8.800-4-8.800-10.700z" fill="#858585"/><path d="M5.500 9.500h2.500v2.500H5.500zM8.800 9.500h2.500v2.500H8.800zM12.100 9.500h2.500v2.500h-2.500zM15.400 9.500h2.500v2.500h-2.500zM8.800 6.300h2.500v2.500H8.800zM12.100 6.300h2.500v2.500h-2.500zM12.100 3.100h2.500v2.500h-2.500z" fill="#858585"/></svg>
<svg style="left:1024px;top:148px;" width="26" height="26" viewBox="0 0 26 26"><rect x="2.500" y="3.500" width="4.500" height="18" rx="1" stroke="#858585" fill="none" stroke-width="1.7"/><path d="M22.500 12.500H10.500M15.500 7.500l-5 5 5 5" stroke="#858585" fill="none" stroke-width="1.7"/></svg>
<span class="t" style="left:1089.00px;top:149.50px;font-size:16.5px;line-height:23px;color:#8a8a8a;">构建</span>
<span class="t" style="left:1152.00px;top:149.50px;font-size:16.5px;line-height:23px;color:#f0f0f0;">调试器</span>
<div style="left:1152.5px;top:179.6px;width:49px;height:1.1px;background:#e6e6e6;"></div>
<div style="left:1214.5px;top:149px;width:40.5px;height:25px;background:#d13c3c;border-radius:12.500px;"></div>
<span class="t" style="left:1221.36px;top:150.50px;font-size:16px;line-height:22px;color:#ffffff;transform:scaleX(0.9180);transform-origin:50% 50%;">8, 5</span>
<span class="t" style="left:1285.00px;top:149.50px;font-size:16.5px;line-height:23px;color:#8a8a8a;">问题</span>
<span class="t" style="left:1348.00px;top:149.50px;font-size:16.5px;line-height:23px;color:#8a8a8a;">输出</span>
<span class="t" style="left:1410.50px;top:149.50px;font-size:16.5px;line-height:23px;color:#8a8a8a;">终端</span>
<span class="t" style="left:1473.50px;top:149.50px;font-size:16.5px;line-height:23px;color:#8a8a8a;">代码质量</span>
<svg style="left:2460px;top:151.5px;" width="24" height="24" viewBox="0 0 24 24"><path d="M5 9l7 7 7-7" stroke="#d8d8d8" stroke-width="1.700" fill="none"/></svg>
<svg style="left:2508px;top:151.5px;" width="24" height="24" viewBox="0 0 24 24"><path d="M5.500 5.500l13 13M18.500 5.500l-13 13" stroke="#d8d8d8" stroke-width="1.700" fill="none"/></svg>
<div style="left:607px;top:184px;width:1.5px;height:1302px;background:#262626;"></div>
<div style="left:608.5px;top:184px;width:450px;height:1302px;background:#2e2e2e;"></div>
<span class="t" style="left:640.00px;top:198.70px;font-size:16.5px;line-height:23px;color:#cfcfcf;">资源管理器</span>
<svg style="left:1008px;top:202px;" width="24" height="16" viewBox="0 0 24 16"><circle cx="3.500" cy="8" r="1.600" fill="#cfcfcf"/><circle cx="10.500" cy="8" r="1.600" fill="#cfcfcf"/><circle cx="17.500" cy="8" r="1.600" fill="#cfcfcf"/></svg>
<div style="left:608.5px;top:236px;width:450px;height:66.3px;background:#383838;"></div>
<svg style="left:619px;top:245.3px;" width="12" height="12" viewBox="0 0 12 12"><path d="M3.500 1.500v9l6-4.500z" fill="#c5c5c5"/></svg>
<span class="t" style="left:640.00px;top:242.00px;font-size:16.5px;line-height:23px;color:#d0d0d0;font-weight:700;">打开的编辑器</span>
<svg style="left:619px;top:280px;" width="12" height="12" viewBox="0 0 12 12"><path d="M1.500 3.500h9l-4.500 6z" fill="#c5c5c5"/></svg>
<span class="t" style="left:640.00px;top:274.50px;font-size:16.5px;line-height:23px;color:#d0d0d0;font-weight:700;transform:scaleX(1.0346);transform-origin:0 50%;">MP-WEIXIN</span>
<svg style="left:898px;top:271.2px;" width="26" height="26" viewBox="0 0 26 26"><path d="M13 4v18M4 13h18" stroke="#c8c8c8" fill="none" stroke-width="1.500"/></svg>
<svg style="left:940px;top:271.2px;" width="26" height="26" viewBox="0 0 26 26"><path d="M2.500 5.500h8l2 2.500h11v14.500h-21z" stroke="#c8c8c8" fill="none" stroke-width="1.500"/><path d="M13 11.500v8M9 15.500h8" stroke="#c8c8c8" fill="none" stroke-width="1.500"/></svg>
<svg style="left:982px;top:271.2px;" width="26" height="26" viewBox="0 0 26 26"><path d="M5 15a8.500 8.500 0 0 1 14-8.500M21 11a8.500 8.500 0 0 1-14 8.500" stroke="#c8c8c8" fill="none" stroke-width="1.500"/><path d="M19.500 2.500v4.500h-4.500M6.500 23.500v-4.500h4.500" stroke="#c8c8c8" fill="none" stroke-width="1.500"/></svg>
<svg style="left:1024px;top:271.2px;" width="26" height="26" viewBox="0 0 26 26"><path d="M3 5h19M3 13h11M3 21h9" stroke="#c8c8c8" fill="none" stroke-width="1.500"/><path d="M16 22h7l-3.500-5z" fill="#c8c8c8"/></svg>
<svg style="left:638px;top:312.7px;" width="12" height="12" viewBox="0 0 12 12"><path d="M1.500 3.500h9l-4.500 6z" fill="#c5c5c5"/></svg>
<svg style="left:662px;top:308.7px;" width="24" height="20" viewBox="0 0 24 20"><path d="M1.500 2.500a1 1 0 0 1 1-1h6l2.500 2.500h8a1 1 0 0 1 1 1V7H6.500L2.500 17h-1z" fill="#90a4ae"/><path d="M7.500 8.500H23.500L19.500 18H3.500z" fill="#90a4ae"/></svg>
<span class="t" style="left:693.50px;top:306.40px;font-size:19.5px;line-height:27px;color:#d4d4d4;transform:scaleX(1.0163);transform-origin:0 50%;">common</span>
<svg style="left:676px;top:342.1px;" width="18.2" height="18.2" viewBox="0.5 0 19.5 19.5"><rect x="0.500" y="0" width="19.500" height="19.500" fill="#ffca28"/><text x="5.300" y="17.300" font-family="Liberation Sans,sans-serif" font-weight="700" font-size="11.300" fill="#40361a" textLength="13" lengthAdjust="spacingAndGlyphs">JS</text></svg>
<span class="t" style="left:705.50px;top:339.40px;font-size:19.5px;line-height:27px;color:#d4d4d4;transform:scaleX(0.9631);transform-origin:0 50%;">main.js</span>
<svg style="left:674px;top:374.7px;" width="22" height="20" viewBox="0 0 22 20"><path d="M3 0.500h18l-2.200 14.500-7.300 4-8-3.500 0.600-4.500h3.200l-0.200 2.300 4.500 1.700 4-1.800 0.500-3.300H2l0.500-3.500h14.100l0.400-2.500H2.500z" fill="#42a5f5"/></svg>
<span class="t" style="left:705.50px;top:372.40px;font-size:19.5px;line-height:27px;color:#d4d4d4;transform:scaleX(0.9447);transform-origin:0 50%;">main.wxss</span>
<svg style="left:676px;top:408.1px;" width="18.2" height="18.2" viewBox="0.5 0 19.5 19.5"><rect x="0.500" y="0" width="19.500" height="19.500" fill="#ffca28"/><text x="5.300" y="17.300" font-family="Liberation Sans,sans-serif" font-weight="700" font-size="11.300" fill="#40361a" textLength="13" lengthAdjust="spacingAndGlyphs">JS</text></svg>
<span class="t" style="left:705.50px;top:405.40px;font-size:19.5px;line-height:27px;color:#d4d4d4;transform:scaleX(0.9937);transform-origin:0 50%;">runtime.js</span>
<div style="left:609px;top:434.2px;width:450px;height:33px;background:#464646;"></div>
<svg style="left:676px;top:441.1px;" width="18.2" height="18.2" viewBox="0.5 0 19.5 19.5"><rect x="0.500" y="0" width="19.500" height="19.500" fill="#ffca28"/><text x="5.300" y="17.300" font-family="Liberation Sans,sans-serif" font-weight="700" font-size="11.300" fill="#40361a" textLength="13" lengthAdjust="spacingAndGlyphs">JS</text></svg>
<span class="t" style="left:705.50px;top:438.40px;font-size:19.5px;line-height:27px;color:#d4d4d4;transform:scaleX(0.9928);transform-origin:0 50%;">vendor.js</span>
<svg style="left:638px;top:477.7px;" width="12" height="12" viewBox="0 0 12 12"><path d="M3.500 1.500v9l6-4.500z" fill="#c5c5c5"/></svg>
<svg style="left:662px;top:473.1px;" width="24" height="20" viewBox="0 0 24 20"><path d="M1.500 2.500a1 1 0 0 1 1-1h6.500l2.500 2.500h9a1 1 0 0 1 1 1V17a1 1 0 0 1-1 1h-18a1 1 0 0 1-1-1z" fill="#cddc39"/></svg>
<svg style="left:671px;top:480.7px;" width="14" height="14" viewBox="0 0 14 14"><path d="M1 4h4.500v4.500H1zM1 9.500h4.500V14H1zM6.500 9.500H11V14H6.500zM9 2l3 3-3 3-3-3z" fill="#f0f4c3"/></svg>
<span class="t" style="left:693.50px;top:471.40px;font-size:19.5px;line-height:27px;color:#d4d4d4;transform:scaleX(1.0072);transform-origin:0 50%;">components</span>
<svg style="left:638px;top:510.7px;" width="12" height="12" viewBox="0 0 12 12"><path d="M3.500 1.500v9l6-4.500z" fill="#c5c5c5"/></svg>
<svg style="left:662px;top:506.1px;" width="24" height="20" viewBox="0 0 24 20"><path d="M1.500 2.500a1 1 0 0 1 1-1h6.500l2.500 2.500h9a1 1 0 0 1 1 1V17a1 1 0 0 1-1 1h-18a1 1 0 0 1-1-1z" fill="#90a4ae"/></svg>
<span class="t" style="left:693.50px;top:504.40px;font-size:19.5px;line-height:27px;color:#d4d4d4;transform:scaleX(1.0154);transform-origin:0 50%;">node-modules</span>
<svg style="left:638px;top:543.7px;" width="12" height="12" viewBox="0 0 12 12"><path d="M1.500 3.500h9l-4.500 6z" fill="#c5c5c5"/></svg>
<svg style="left:662px;top:539.7px;" width="24" height="20" viewBox="0 0 24 20"><path d="M1.500 2.500a1 1 0 0 1 1-1h6l2.500 2.500h8a1 1 0 0 1 1 1V7H6.500L2.500 17h-1z" fill="#ff7043"/><path d="M7.500 8.500H23.500L19.500 18H3.500z" fill="#ff7043"/></svg>
<svg style="left:671px;top:546.7px;" width="14" height="14" viewBox="0 0 14 14"><rect x="0.500" y="0.500" width="12.500" height="12.500" rx="2" fill="#ffccbc"/><path d="M5 4l-2.500 2.800L5 9.500M8.500 4L11 6.800 8.500 9.500" stroke="#ff7043" stroke-width="1.300" fill="none"/></svg>
<span class="t" style="left:693.50px;top:537.40px;font-size:19.5px;line-height:27px;color:#d4d4d4;transform:scaleX(0.9597);transform-origin:0 50%;">pages</span>
<svg style="left:650.5px;top:576.7px;" width="12" height="12" viewBox="0 0 12 12"><path d="M3.500 1.500v9l6-4.500z" fill="#c5c5c5"/></svg>
<svg style="left:674px;top:572.1px;" width="24" height="20" viewBox="0 0 24 20"><path d="M1.500 2.500a1 1 0 0 1 1-1h6.500l2.500 2.500h9a1 1 0 0 1 1 1V17a1 1 0 0 1-1 1h-18a1 1 0 0 1-1-1z" fill="#90a4ae"/></svg>
<span class="t" style="left:705.50px;top:570.40px;font-size:19.5px;line-height:27px;color:#d4d4d4;transform:scaleX(0.9727);transform-origin:0 50%;">addOrEditAddress</span>
<svg style="left:650.5px;top:609.7px;" width="12" height="12" viewBox="0 0 12 12"><path d="M3.500 1.500v9l6-4.500z" fill="#c5c5c5"/></svg>
<svg style="left:674px;top:605.1px;" width="24" height="20" viewBox="0 0 24 20"><path d="M1.500 2.500a1 1 0 0 1 1-1h6.500l2.500 2.500h9a1 1 0 0 1 1 1V17a1 1 0 0 1-1 1h-18a1 1 0 0 1-1-1z" fill="#90a4ae"/></svg>
<span class="t" style="left:705.50px;top:603.40px;font-size:19.5px;line-height:27px;color:#d4d4d4;transform:scaleX(0.9514);transform-origin:0 50%;">address</span>
<div style="left:609px;top:632.2px;width:450px;height:33px;background:#3e3e3e;"></div>
<svg style="left:650.5px;top:642.7px;" width="12" height="12" viewBox="0 0 12 12"><path d="M3.500 1.500v9l6-4.500z" fill="#c5c5c5"/></svg>
<svg style="left:674px;top:638.1px;" width="24" height="20" viewBox="0 0 24 20"><path d="M1.500 2.500a1 1 0 0 1 1-1h6.500l2.500 2.500h9a1 1 0 0 1 1 1V17a1 1 0 0 1-1 1h-18a1 1 0 0 1-1-1z" fill="#90a4ae"/></svg>
<span class="t" style="left:705.50px;top:636.40px;font-size:19.5px;line-height:27px;color:#d4d4d4;transform:scaleX(1.0163);transform-origin:0 50%;">common</span>
<svg style="left:650.5px;top:675.7px;" width="12" height="12" viewBox="0 0 12 12"><path d="M3.500 1.500v9l6-4.500z" fill="#c5c5c5"/></svg>
<svg style="left:674px;top:671.1px;" width="24" height="20" viewBox="0 0 24 20"><path d="M1.500 2.500a1 1 0 0 1 1-1h6.500l2.500 2.500h9a1 1 0 0 1 1 1V17a1 1 0 0 1-1 1h-18a1 1 0 0 1-1-1z" fill="#90a4ae"/></svg>
<span class="t" style="left:705.50px;top:669.40px;font-size:19.5px;line-height:27px;color:#d4d4d4;transform:scaleX(0.9933);transform-origin:0 50%;">details</span>
<svg style="left:650.5px;top:708.7px;" width="12" height="12" viewBox="0 0 12 12"><path d="M3.500 1.500v9l6-4.500z" fill="#c5c5c5"/></svg>
<svg style="left:674px;top:704.1px;" width="24" height="20" viewBox="0 0 24 20"><path d="M1.500 2.500a1 1 0 0 1 1-1h6.500l2.500 2.500h9a1 1 0 0 1 1 1V17a1 1 0 0 1-1 1h-18a1 1 0 0 1-1-1z" fill="#90a4ae"/></svg>
<span class="t" style="left:705.50px;top:702.40px;font-size:19.5px;line-height:27px;color:#d4d4d4;transform:scaleX(1.0067);transform-origin:0 50%;">historyOrder</span>
<svg style="left:650.5px;top:741.7px;" width="12" height="12" viewBox="0 0 12 12"><path d="M3.500 1.500v9l6-4.500z" fill="#c5c5c5"/></svg>
<svg style="left:674px;top:737.1px;" width="24" height="20" viewBox="0 0 24 20"><path d="M1.500 2.500a1 1 0 0 1 1-1h6.500l2.500 2.500h9a1 1 0 0 1 1 1V17a1 1 0 0 1-1 1h-18a1 1 0 0 1-1-1z" fill="#90a4ae"/></svg>
<span class="t" style="left:705.50px;top:735.40px;font-size:19.5px;line-height:27px;color:#d4d4d4;">index</span>
<svg style="left:650.5px;top:774.7px;" width="12" height="12" viewBox="0 0 12 12"><path d="M3.500 1.500v9l6-4.500z" fill="#c5c5c5"/></svg>
<svg style="left:674px;top:770.1px;" width="24" height="20" viewBox="0 0 24 20"><path d="M1.500 2.500a1 1 0 0 1 1-1h6.500l2.500 2.500h9a1 1 0 0 1 1 1V17a1 1 0 0 1-1 1h-18a1 1 0 0 1-1-1z" fill="#90a4ae"/></svg>
<span class="t" style="left:705.50px;top:768.40px;font-size:19.5px;line-height:27px;color:#d4d4d4;">my</span>
<svg style="left:650.5px;top:807.7px;" width="12" height="12" viewBox="0 0 12 12"><path d="M3.500 1.500v9l6-4.500z" fill="#c5c5c5"/></svg>
<svg style="left:674px;top:803.1px;" width="24" height="20" viewBox="0 0 24 20"><path d="M1.500 2.500a1 1 0 0 1 1-1h6.500l2.500 2.500h9a1 1 0 0 1 1 1V17a1 1 0 0 1-1 1h-18a1 1 0 0 1-1-1z" fill="#90a4ae"/></svg>
<span class="t" style="left:705.50px;top:801.40px;font-size:19.5px;line-height:27px;color:#d4d4d4;transform:scaleX(1.0346);transform-origin:0 50%;">nonet</span>
<svg style="left:650.5px;top:840.7px;" width="12" height="12" viewBox="0 0 12 12"><path d="M3.500 1.500v9l6-4.500z" fill="#c5c5c5"/></svg>
<svg style="left:674px;top:836.1px;" width="24" height="20" viewBox="0 0 24 20"><path d="M1.500 2.500a1 1 0 0 1 1-1h6.500l2.500 2.500h9a1 1 0 0 1 1 1V17a1 1 0 0 1-1 1h-18a1 1 0 0 1-1-1z" fill="#90a4ae"/></svg>
<span class="t" style="left:705.50px;top:834.40px;font-size:19.5px;line-height:27px;color:#d4d4d4;transform:scaleX(1.0213);transform-origin:0 50%;">order</span>
<svg style="left:650.5px;top:873.7px;" width="12" height="12" viewBox="0 0 12 12"><path d="M3.500 1.500v9l6-4.500z" fill="#c5c5c5"/></svg>
<svg style="left:674px;top:869.1px;" width="24" height="20" viewBox="0 0 24 20"><path d="M1.500 2.500a1 1 0 0 1 1-1h6.500l2.500 2.500h9a1 1 0 0 1 1 1V17a1 1 0 0 1-1 1h-18a1 1 0 0 1-1-1z" fill="#90a4ae"/></svg>
<span class="t" style="left:705.50px;top:867.40px;font-size:19.5px;line-height:27px;color:#d4d4d4;transform:scaleX(0.9856);transform-origin:0 50%;">pay</span>
<svg style="left:650.5px;top:906.7px;" width="12" height="12" viewBox="0 0 12 12"><path d="M3.500 1.500v9l6-4.500z" fill="#c5c5c5"/></svg>
<svg style="left:674px;top:902.1px;" width="24" height="20" viewBox="0 0 24 20"><path d="M1.500 2.500a1 1 0 0 1 1-1h6.500l2.500 2.500h9a1 1 0 0 1 1 1V17a1 1 0 0 1-1 1h-18a1 1 0 0 1-1-1z" fill="#90a4ae"/></svg>
<span class="t" style="left:705.50px;top:900.40px;font-size:19.5px;line-height:27px;color:#d4d4d4;">remark</span>
<svg style="left:650.5px;top:939.7px;" width="12" height="12" viewBox="0 0 12 12"><path d="M3.500 1.500v9l6-4.500z" fill="#c5c5c5"/></svg>
<svg style="left:674px;top:935.1px;" width="24" height="20" viewBox="0 0 24 20"><path d="M1.500 2.500a1 1 0 0 1 1-1h6.500l2.500 2.500h9a1 1 0 0 1 1 1V17a1 1 0 0 1-1 1h-18a1 1 0 0 1-1-1z" fill="#90a4ae"/></svg>
<span class="t" style="left:705.50px;top:933.40px;font-size:19.5px;line-height:27px;color:#d4d4d4;transform:scaleX(0.9013);transform-origin:0 50%;">success</span>
<svg style="left:638px;top:972.7px;" width="12" height="12" viewBox="0 0 12 12"><path d="M3.500 1.500v9l6-4.500z" fill="#c5c5c5"/></svg>
<svg style="left:662px;top:968.1px;" width="24" height="20" viewBox="0 0 24 20"><path d="M1.500 2.500a1 1 0 0 1 1-1h6.500l2.500 2.500h9a1 1 0 0 1 1 1V17a1 1 0 0 1-1 1h-18a1 1 0 0 1-1-1z" fill="#fbc02d"/></svg>
<svg style="left:671px;top:975.7px;" width="14" height="14" viewBox="0 0 14 14"><rect x="1" y="0.500" width="12" height="12.500" rx="2" fill="#fff9c4"/><path d="M3.500 4h7M3.500 6.800h7M3.500 9.500h7" stroke="#fbc02d" stroke-width="1.200"/></svg>
<span class="t" style="left:693.50px;top:966.40px;font-size:19.5px;line-height:27px;color:#d4d4d4;">static</span>
<svg style="left:638px;top:1005.7px;" width="12" height="12" viewBox="0 0 12 12"><path d="M3.500 1.500v9l6-4.500z" fill="#c5c5c5"/></svg>
<svg style="left:662px;top:1001.1px;" width="24" height="20" viewBox="0 0 24 20"><path d="M1.500 2.500a1 1 0 0 1 1-1h6.500l2.500 2.500h9a1 1 0 0 1 1 1V17a1 1 0 0 1-1 1h-18a1 1 0 0 1-1-1z" fill="#90a4ae"/></svg>
<span class="t" style="left:693.50px;top:999.40px;font-size:19.5px;line-height:27px;color:#d4d4d4;transform:scaleX(0.9812);transform-origin:0 50%;">uni_modules</span>
<svg style="left:662px;top:1033.7px;" width="22" height="22" viewBox="0 0 22 22"><path d="M10.500 0.800L20.200 10.500 10.500 20.200 0.800 10.500z" fill="#e64a19"/><path d="M8 5.500l3 3v6M11 9.500l3.500 3.500" stroke="#2e2e2e" stroke-width="1.500" fill="none"/><circle cx="11" cy="8.800" r="1.500" fill="#2e2e2e"/><circle cx="11" cy="14.500" r="1.500" fill="#2e2e2e"/><circle cx="14.500" cy="12.500" r="1.500" fill="#2e2e2e"/></svg>
<span class="t" style="left:693.50px;top:1032.40px;font-size:19.5px;line-height:27px;color:#d4d4d4;transform:scaleX(1.0284);transform-origin:0 50%;">.gitignore</span>
<svg style="left:664px;top:1068.1px;" width="18.2" height="18.2" viewBox="0.5 0 19.5 19.5"><rect x="0.500" y="0" width="19.500" height="19.500" fill="#ffca28"/><text x="5.300" y="17.300" font-family="Liberation Sans,sans-serif" font-weight="700" font-size="11.300" fill="#40361a" textLength="13" lengthAdjust="spacingAndGlyphs">JS</text></svg>
<span class="t" style="left:693.50px;top:1065.40px;font-size:19.5px;line-height:27px;color:#d4d4d4;transform:scaleX(0.9607);transform-origin:0 50%;">app.js</span>
<svg style="left:660px;top:1099.7px;" width="28" height="22" viewBox="0 0 28 22"><path d="M7.500 2c-3 0-3.500 1.200-3.500 3v3c0 1.500-0.500 2.500-2.500 3 2 0.500 2.500 1.500 2.500 3v3c0 1.800 0.500 3 3.500 3M20.500 2c3 0 3.500 1.200 3.500 3v3c0 1.500 0.500 2.500 2.500 3-2 0.500-2.500 1.500-2.500 3v3c0 1.800-0.500 3-3.500 3" stroke="#fbc02d" stroke-width="2" fill="none"/><circle cx="9.500" cy="14" r="1.200" fill="#fbc02d"/><circle cx="14" cy="14" r="1.200" fill="#fbc02d"/><circle cx="18.500" cy="14" r="1.200" fill="#fbc02d"/></svg>
<span class="t" style="left:693.50px;top:1098.40px;font-size:19.5px;line-height:27px;color:#d4d4d4;transform:scaleX(0.9833);transform-origin:0 50%;">app.json</span>
<svg style="left:662px;top:1133.7px;" width="22" height="20" viewBox="0 0 22 20"><path d="M3 0.500h18l-2.200 14.500-7.300 4-8-3.500 0.600-4.500h3.200l-0.200 2.300 4.500 1.700 4-1.800 0.500-3.300H2l0.500-3.500h14.100l0.400-2.500H2.500z" fill="#42a5f5"/></svg>
<span class="t" style="left:693.50px;top:1131.40px;font-size:19.5px;line-height:27px;color:#d4d4d4;transform:scaleX(0.9410);transform-origin:0 50%;">app.wxss</span>
<svg style="left:660px;top:1165.7px;" width="28" height="22" viewBox="0 0 28 22"><path d="M7.500 2c-3 0-3.500 1.200-3.500 3v3c0 1.500-0.500 2.500-2.500 3 2 0.500 2.500 1.500 2.500 3v3c0 1.800 0.500 3 3.500 3M20.500 2c3 0 3.500 1.200 3.500 3v3c0 1.500 0.500 2.500 2.500 3-2 0.500-2.500 1.500-2.500 3v3c0 1.800-0.500 3-3.500 3" stroke="#fbc02d" stroke-width="2" fill="none"/><circle cx="9.500" cy="14" r="1.200" fill="#fbc02d"/><circle cx="14" cy="14" r="1.200" fill="#fbc02d"/><circle cx="18.500" cy="14" r="1.200" fill="#fbc02d"/></svg>
<span class="t" style="left:693.50px;top:1164.40px;font-size:19.5px;line-height:27px;color:#d4d4d4;">project.config.json</span>
<svg style="left:660px;top:1198.7px;" width="28" height="22" viewBox="0 0 28 22"><path d="M7.500 2c-3 0-3.500 1.200-3.500 3v3c0 1.500-0.500 2.500-2.500 3 2 0.500 2.500 1.500 2.500 3v3c0 1.800 0.500 3 3.500 3M20.500 2c3 0 3.500 1.200 3.500 3v3c0 1.500 0.500 2.500 2.500 3-2 0.500-2.500 1.500-2.500 3v3c0 1.800-0.500 3-3.500 3" stroke="#fbc02d" stroke-width="2" fill="none"/><circle cx="9.500" cy="14" r="1.200" fill="#fbc02d"/><circle cx="14" cy="14" r="1.200" fill="#fbc02d"/><circle cx="18.500" cy="14" r="1.200" fill="#fbc02d"/></svg>
<span class="t" style="left:693.50px;top:1197.40px;font-size:19.5px;line-height:27px;color:#d4d4d4;">project.private.config.json</span>
<svg style="left:660px;top:1231.7px;" width="28" height="22" viewBox="0 0 28 22"><path d="M7.500 2c-3 0-3.500 1.200-3.500 3v3c0 1.500-0.500 2.500-2.500 3 2 0.500 2.500 1.500 2.500 3v3c0 1.800 0.500 3 3.500 3M20.500 2c3 0 3.500 1.200 3.500 3v3c0 1.500 0.500 2.500 2.500 3-2 0.500-2.500 1.500-2.500 3v3c0 1.800-0.500 3-3.500 3" stroke="#fbc02d" stroke-width="2" fill="none"/><circle cx="9.500" cy="14" r="1.200" fill="#fbc02d"/><circle cx="14" cy="14" r="1.200" fill="#fbc02d"/><circle cx="18.500" cy="14" r="1.200" fill="#fbc02d"/></svg>
<span class="t" style="left:693.50px;top:1230.40px;font-size:19.5px;line-height:27px;color:#d4d4d4;transform:scaleX(0.9820);transform-origin:0 50%;">sitemap.json</span>
<div style="left:640px;top:335.2px;width:1px;height:132px;background:#4a4a4a;"></div>
<div style="left:640px;top:566.2px;width:1px;height:396px;background:#4a4a4a;"></div>
<div style="left:609px;top:1460px;width:450px;height:26px;background:#383838;"></div>
<svg style="left:619px;top:1471px;" width="12" height="12" viewBox="0 0 12 12"><path d="M3.500 1.500v9l6-4.500z" fill="#c5c5c5"/></svg>
<span class="t" style="left:640.00px;top:1466.50px;font-size:16.5px;line-height:23px;color:#d0d0d0;font-weight:700;">大纲</span>
<div style="left:1059px;top:184px;width:1px;height:1302px;background:#252525;"></div>
<div style="left:1060px;top:184px;width:1500px;height:1302px;background:#242424;"></div>
<div style="left:1060px;top:183px;width:1500px;height:40px;background:#292a2d;"></div>
<div style="left:1060px;top:222.5px;width:1500px;height:1px;background:#3a3b3e;"></div>
<svg style="left:1072px;top:191px;" width="26" height="26" viewBox="0 0 26 26"><path d="M18 8V5.500a1.500 1.500 0 0 0-1.500-1.500h-11A1.500 1.500 0 0 0 4 5.500v11A1.500 1.500 0 0 0 5.500 18H9" stroke="#929292" fill="none" stroke-width="1.700"/><path d="M11.500 10l11 4.200-4.600 1.700 4.100 4.100-1.800 1.800-4.100-4.100-1.700 4.600z" fill="#929292"/></svg>
<div style="left:1112px;top:192px;width:1px;height:23px;background:#46474a;"></div>
<div style="left:1399px;top:183px;width:104px;height:38.8px;background:#000000;"></div>
<span class="t" style="left:1139.00px;top:191.50px;font-size:18px;line-height:25px;color:#e2e3e5;">Wxml</span>
<span class="t" style="left:1220.00px;top:191.50px;font-size:18px;line-height:25px;color:#e2e3e5;transform:scaleX(0.9690);transform-origin:0 50%;">Console</span>
<span class="t" style="left:1319.00px;top:191.50px;font-size:18px;line-height:25px;color:#e2e3e5;transform:scaleX(0.9387);transform-origin:0 50%;">Sources</span>
<span class="t" style="left:1416.70px;top:191.50px;font-size:18px;line-height:25px;color:#ffffff;transform:scaleX(1.0225);transform-origin:0 50%;">Network</span>
<span class="t" style="left:1520.70px;top:191.50px;font-size:18px;line-height:25px;color:#e2e3e5;transform:scaleX(0.9656);transform-origin:0 50%;">Performance</span>
<span class="t" style="left:1655.00px;top:191.50px;font-size:18px;line-height:25px;color:#e2e3e5;transform:scaleX(1.0274);transform-origin:0 50%;">Memory</span>
<span class="t" style="left:1757.00px;top:191.50px;font-size:18px;line-height:25px;color:#e2e3e5;transform:scaleX(0.9848);transform-origin:0 50%;">AppData</span>
<span class="t" style="left:1862.00px;top:191.50px;font-size:18px;line-height:25px;color:#e2e3e5;transform:scaleX(0.9675);transform-origin:0 50%;">Storage</span>
<span class="t" style="left:1958.00px;top:191.50px;font-size:18px;line-height:25px;color:#e2e3e5;transform:scaleX(0.9642);transform-origin:0 50%;">Security</span>
<span class="t" style="left:2070.00px;top:191.50px;font-size:18px;line-height:25px;color:#e2e3e5;transform:scaleX(0.9466);transform-origin:0 50%;">Sensor</span>
<span class="t" style="left:2159.40px;top:191.50px;font-size:18px;line-height:25px;color:#e2e3e5;transform:scaleX(1.0229);transform-origin:0 50%;">Mock</span>
<svg style="left:2230px;top:192px;" width="24" height="24" viewBox="0 0 24 24"><path d="M5.500 6.800l5.200 5.200-5.200 5.200M12 6.800l5.200 5.200-5.200 5.200" stroke="#c4c7c5" stroke-width="1.700" fill="none"/></svg>
<svg style="left:2335px;top:192.5px;" width="22" height="22" viewBox="0 0 22 22"><circle cx="11" cy="11" r="7.500" fill="#f0384a"/><path d="M8 8l6 6M14 8l-6 6" stroke="#fff" stroke-width="1.800"/></svg>
<span class="t" style="left:2358.50px;top:191.50px;font-size:18px;line-height:25px;color:#e2e3e5;">8</span>
<svg style="left:2373px;top:191.5px;" width="24" height="24" viewBox="0 0 24 24"><path d="M12 4.500l7.800 14.700H4.200z" fill="#f5bd1e" stroke="#f5bd1e" stroke-width="1.200" stroke-linejoin="round"/><path d="M12 9.500v5.500" stroke="#fff" stroke-width="2"/><circle cx="12" cy="17.300" r="1.100" fill="#fff"/></svg>
<span class="t" style="left:2398.50px;top:191.50px;font-size:18px;line-height:25px;color:#e2e3e5;">5</span>
<div style="left:2424px;top:192px;width:1px;height:23px;background:#46474a;"></div>
<svg style="left:2438.5px;top:189.5px;" width="27" height="27" viewBox="0 0 24 24"><path d="M19.140 12.940c.04-.3.060-.610.060-.940 0-.320-.020-.640-.070-.940l2.030-1.580a.490.490 0 0 0 .120-.610l-1.920-3.320a.488.488 0 0 0-.590-.220l-2.390.960c-.500-.380-1.030-.700-1.620-.940l-.360-2.540a.484.484 0 0 0-.480-.410h-3.840c-.240 0-.430.170-.470.410l-.360 2.540c-.590.240-1.130.570-1.620.940l-2.390-.960c-.220-.080-.470 0-.590.220L2.740 8.870c-.120.210-.080.470.120.610l2.030 1.580c-.05.300-.9.630-.9.940s.2.640.07.940l-2.030 1.580a.490.490 0 0 0-.120.610l1.920 3.320c.12.220.37.290.59.220l2.390-.960c.5.380 1.030.7 1.620.94l.36 2.540c.5.240.24.410.48.410h3.840c.24 0 .44-.17.470-.41l.36-2.540c.59-.24 1.130-.56 1.620-.94l2.390.96c.22.080.47 0 .59-.22l1.920-3.320c.12-.22.070-.47-.12-.61l-2.010-1.580zM12 15.600c-1.980 0-3.600-1.620-3.600-3.600s1.620-3.600 3.600-3.600 3.600 1.620 3.600 3.600-1.620 3.600-3.600 3.600z" fill="#929292"/></svg>
<svg style="left:2484px;top:189px;" width="22" height="28" viewBox="0 0 22 28"><circle cx="11" cy="6" r="2.200" fill="#929292"/><circle cx="11" cy="14" r="2.200" fill="#929292"/><circle cx="11" cy="22" r="2.200" fill="#929292"/></svg>
<svg style="left:2522px;top:191px;" width="28" height="24" viewBox="0 0 28 24"><path d="M8 2h18v14H8z" fill="#929292"/><path d="M11 7h12v6.500H11z" fill="#292a2d"/><path d="M2.500 8v13.500H22" stroke="#929292" stroke-width="2.500" fill="none"/></svg>
<div style="left:1060px;top:223.5px;width:1500px;height:39.5px;background:#292a2d;"></div>
<div style="left:1060px;top:262.5px;width:1500px;height:1px;background:#3a3b3e;"></div>
<svg style="left:1069px;top:229px;" width="30" height="30" viewBox="0 0 30 30"><defs><radialGradient id="rg"><stop offset="0.550" stop-color="#f25050"/><stop offset="1" stop-color="#f25050" stop-opacity="0"/></radialGradient></defs><circle cx="15" cy="15" r="13" fill="url(#rg)" opacity=".5"/><circle cx="15" cy="15" r="9" fill="#f45252"/></svg>
<svg style="left:1114px;top:231px;" width="26" height="26" viewBox="0 0 26 26"><circle cx="13" cy="13" r="8.500" stroke="#929292" stroke-width="2.400" fill="none"/><path d="M7 7l12 12" stroke="#929292" stroke-width="2.400"/></svg>
<div style="left:1154px;top:232px;width:1px;height:23px;background:#46474a;"></div>
<svg style="left:1169px;top:231px;" width="26" height="26" viewBox="0 0 26 26"><path d="M2.500 5.500h21c-2 3.500-5 6-7.500 8.500v8.500h-6V14c-2.500-2.500-5.500-5-7.500-8.500z" fill="#1a86e0"/></svg>
<svg style="left:1211px;top:231px;" width="26" height="26" viewBox="0 0 26 26"><circle cx="10.500" cy="10.500" r="6.500" stroke="#929292" stroke-width="2.200" fill="none"/><path d="M15.500 15.500l7 7" stroke="#929292" stroke-width="2.500"/></svg>
<div style="left:1251px;top:232px;width:1px;height:23px;background:#46474a;"></div>
<div style="left:1267px;top:234px;width:18px;height:18px;background:#3a3a3a;border:1.500px solid #858688;border-radius:3.500px;"></div>
<span class="t" style="left:1294.50px;top:232.00px;font-size:18px;line-height:25px;color:#e2e3e5;transform:scaleX(0.9549);transform-origin:0 50%;">Preserve log</span>
<div style="left:1408.5px;top:234px;width:18px;height:18px;background:#3a3a3a;border:1.500px solid #858688;border-radius:3.500px;"></div>
<span class="t" style="left:1435.70px;top:232.00px;font-size:18px;line-height:25px;color:#e2e3e5;transform:scaleX(0.9464);transform-origin:0 50%;">Disable cache</span>
<div style="left:1558px;top:232px;width:1px;height:23px;background:#46474a;"></div>
<span class="t" style="left:1573.50px;top:232.00px;font-size:18px;line-height:25px;color:#e2e3e5;">Online</span>
<svg style="left:1665px;top:238px;" width="14" height="12" viewBox="0 0 14 12"><path d="M1.500 2h11l-5.500 8.500z" fill="#929292"/></svg>
<div style="left:1695.5px;top:232px;width:1px;height:23px;background:#46474a;"></div>
<svg style="left:1711px;top:231px;" width="24" height="26" viewBox="0 0 24 26"><path d="M12 3l7.500 8.500h-4.500v6.500h-6v-6.500H4.500z" fill="#929292"/><path d="M4.500 21.500h15" stroke="#929292" stroke-width="2.200"/></svg>
<svg style="left:1753px;top:231px;" width="24" height="26" viewBox="0 0 24 26"><path d="M12 18.500l7.500-8.500h-4.500V3h-6v7H4.500z" fill="#929292"/><path d="M4.500 21.500h15" stroke="#929292" stroke-width="2.200"/></svg>
<div style="left:2508px;top:232px;width:1px;height:23px;background:#46474a;"></div>
<svg style="left:2522.5px;top:229.5px;" width="27" height="27" viewBox="0 0 24 24"><path d="M19.140 12.940c.04-.3.060-.610.060-.940 0-.320-.020-.640-.070-.940l2.030-1.580a.490.490 0 0 0 .120-.610l-1.920-3.320a.488.488 0 0 0-.590-.220l-2.390.960c-.500-.380-1.030-.700-1.620-.940l-.360-2.540a.484.484 0 0 0-.480-.410h-3.840c-.240 0-.430.170-.470.410l-.360 2.540c-.590.240-1.130.570-1.620.940l-2.390-.960c-.220-.080-.470 0-.590.220L2.740 8.870c-.120.210-.080.470.120.610l2.030 1.580c-.05.300-.9.630-.9.940s.2.640.07.940l-2.030 1.580a.490.490 0 0 0-.120.610l1.920 3.320c.12.220.37.290.59.220l2.390-.960c.5.380 1.030.7 1.620.94l.36 2.540c.5.240.24.410.48.410h3.840c.24 0 .44-.17.470-.41l.36-2.540c.59-.24 1.130-.56 1.620-.94l2.390.96c.22.080.47 0 .59-.22l1.920-3.320c.12-.22.070-.47-.12-.61l-2.010-1.580zM12 15.600c-1.980 0-3.600-1.620-3.600-3.600s1.620-3.600 3.600-3.600 3.600 1.620 3.600 3.600-1.620 3.600-3.600 3.600z" fill="#929292"/></svg>
<div style="left:1060px;top:263.5px;width:1500px;height:37.5px;background:#292a2d;"></div>
<div style="left:1060px;top:300.5px;width:1500px;height:1px;background:#3a3b3e;"></div>
<div style="left:1064.5px;top:268px;width:248px;height:29.5px;background:#242424;border:1.500px solid #1766ad;"></div>
<span class="t" style="left:1071.00px;top:272.00px;font-size:18px;line-height:25px;color:#c4c5c7;transform:scaleX(0.9750);transform-origin:0 50%;">Filter</span>
<div style="left:1330px;top:273px;width:18px;height:18px;background:#3a3a3a;border:1.500px solid #858688;border-radius:3.500px;"></div>
<span class="t" style="left:1357.00px;top:271.00px;font-size:18px;line-height:25px;color:#e2e3e5;transform:scaleX(0.9561);transform-origin:0 50%;">Hide data URLs</span>
<div style="left:1487px;top:267.5px;width:30px;height:31.5px;background:#68696b;border-radius:7px;"></div>
<span class="t" style="left:1491.99px;top:272.50px;font-size:18px;line-height:25px;color:#a9abad;">All</span>
<div style="left:1523.5px;top:271px;width:1px;height:24px;background:#46474a;"></div>
<span class="t" style="left:1535.00px;top:272.50px;font-size:18px;line-height:25px;color:#e2e3e5;transform:scaleX(0.9781);transform-origin:0 50%;">Cloud</span>
<span class="t" style="left:1596.00px;top:272.50px;font-size:18px;line-height:25px;color:#e2e3e5;transform:scaleX(0.9128);transform-origin:0 50%;">XHR</span>
<span class="t" style="left:1646.00px;top:272.50px;font-size:18px;line-height:25px;color:#e2e3e5;transform:scaleX(0.7375);transform-origin:0 50%;">JS</span>
<span class="t" style="left:1676.50px;top:272.50px;font-size:18px;line-height:25px;color:#e2e3e5;transform:scaleX(0.8105);transform-origin:0 50%;">CSS</span>
<span class="t" style="left:1722.40px;top:272.50px;font-size:18px;line-height:25px;color:#e2e3e5;">Img</span>
<span class="t" style="left:1768.20px;top:272.50px;font-size:18px;line-height:25px;color:#e2e3e5;transform:scaleX(1.0034);transform-origin:0 50%;">Media</span>
<span class="t" style="left:1832.70px;top:272.50px;font-size:18px;line-height:25px;color:#e2e3e5;transform:scaleX(0.9714);transform-origin:0 50%;">Font</span>
<span class="t" style="left:1884.00px;top:272.50px;font-size:18px;line-height:25px;color:#e2e3e5;transform:scaleX(0.9558);transform-origin:0 50%;">Doc</span>
<span class="t" style="left:1930.00px;top:272.50px;font-size:18px;line-height:25px;color:#e2e3e5;transform:scaleX(0.8966);transform-origin:0 50%;">WS</span>
<span class="t" style="left:1971.00px;top:272.50px;font-size:18px;line-height:25px;color:#e2e3e5;transform:scaleX(1.0040);transform-origin:0 50%;">Manifest</span>
<span class="t" style="left:2054.60px;top:272.50px;font-size:18px;line-height:25px;color:#e2e3e5;transform:scaleX(1.0171);transform-origin:0 50%;">Other</span>
<div style="left:2123.3px;top:273px;width:18px;height:18px;background:#3a3a3a;border:1.500px solid #858688;border-radius:3.500px;"></div>
<span class="t" style="left:2150.50px;top:271.00px;font-size:18px;line-height:25px;color:#e2e3e5;transform:scaleX(0.9722);transform-origin:0 50%;">Has blocked cookies</span>
<div style="left:2327px;top:273px;width:18px;height:18px;background:#3a3a3a;border:1.500px solid #858688;border-radius:3.500px;"></div>
<span class="t" style="left:2354.00px;top:271.00px;font-size:18px;line-height:25px;color:#e2e3e5;transform:scaleX(0.9511);transform-origin:0 50%;">Blocked Requests</span>
<div style="left:1060px;top:301.5px;width:1500px;height:121px;background:#242424;"></div>
<div style="left:1060px;top:422.5px;width:1500px;height:1px;background:#3a3b3e;"></div>
<div style="left:1061px;top:303px;width:3px;height:31px;background:#4a4a4a;"></div>
<div style="left:1163.1px;top:301.5px;width:1px;height:121px;background:#3b3b3b;"></div>
<span class="t" style="left:1100.15px;top:308.00px;font-size:15.5px;line-height:22px;color:#d0d0d0;transform:scaleX(0.8847);transform-origin:100% 50%;">1000 ms</span>
<div style="left:1265px;top:301.5px;width:1px;height:121px;background:#3b3b3b;"></div>
<span class="t" style="left:1202.05px;top:308.00px;font-size:15.5px;line-height:22px;color:#d0d0d0;transform:scaleX(0.8847);transform-origin:100% 50%;">2000 ms</span>
<div style="left:1366.9px;top:301.5px;width:1px;height:121px;background:#3b3b3b;"></div>
<span class="t" style="left:1303.95px;top:308.00px;font-size:15.5px;line-height:22px;color:#d0d0d0;transform:scaleX(0.8847);transform-origin:100% 50%;">3000 ms</span>
<div style="left:1468.8px;top:301.5px;width:1px;height:121px;background:#3b3b3b;"></div>
<span class="t" style="left:1405.85px;top:308.00px;font-size:15.5px;line-height:22px;color:#d0d0d0;transform:scaleX(0.8847);transform-origin:100% 50%;">4000 ms</span>
<div style="left:1570.7px;top:301.5px;width:1px;height:121px;background:#3b3b3b;"></div>
<span class="t" style="left:1507.75px;top:308.00px;font-size:15.5px;line-height:22px;color:#d0d0d0;transform:scaleX(0.8847);transform-origin:100% 50%;">5000 ms</span>
<div style="left:1672.6px;top:301.5px;width:1px;height:121px;background:#3b3b3b;"></div>
<span class="t" style="left:1609.65px;top:308.00px;font-size:15.5px;line-height:22px;color:#d0d0d0;transform:scaleX(0.8847);transform-origin:100% 50%;">6000 ms</span>
<div style="left:1774.5px;top:301.5px;width:1px;height:121px;background:#3b3b3b;"></div>
<span class="t" style="left:1711.55px;top:308.00px;font-size:15.5px;line-height:22px;color:#d0d0d0;transform:scaleX(0.8847);transform-origin:100% 50%;">7000 ms</span>
<div style="left:1876.4px;top:301.5px;width:1px;height:121px;background:#3b3b3b;"></div>
<span class="t" style="left:1813.45px;top:308.00px;font-size:15.5px;line-height:22px;color:#d0d0d0;transform:scaleX(0.8847);transform-origin:100% 50%;">8000 ms</span>
<div style="left:1978.3px;top:301.5px;width:1px;height:121px;background:#3b3b3b;"></div>
<span class="t" style="left:1915.35px;top:308.00px;font-size:15.5px;line-height:22px;color:#d0d0d0;transform:scaleX(0.8847);transform-origin:100% 50%;">9000 ms</span>
<div style="left:2080.2px;top:301.5px;width:1px;height:121px;background:#3b3b3b;"></div>
<span class="t" style="left:2008.62px;top:308.00px;font-size:15.5px;line-height:22px;color:#d0d0d0;transform:scaleX(0.8843);transform-origin:100% 50%;">10000 ms</span>
<div style="left:2182.1px;top:301.5px;width:1px;height:121px;background:#3b3b3b;"></div>
<span class="t" style="left:2111.68px;top:308.00px;font-size:15.5px;line-height:22px;color:#d0d0d0;transform:scaleX(0.8996);transform-origin:100% 50%;">11000 ms</span>
<div style="left:2284px;top:301.5px;width:1px;height:121px;background:#3b3b3b;"></div>
<span class="t" style="left:2212.42px;top:308.00px;font-size:15.5px;line-height:22px;color:#d0d0d0;transform:scaleX(0.8843);transform-origin:100% 50%;">12000 ms</span>
<div style="left:2385.9px;top:301.5px;width:1px;height:121px;background:#3b3b3b;"></div>
<span class="t" style="left:2314.32px;top:308.00px;font-size:15.5px;line-height:22px;color:#d0d0d0;transform:scaleX(0.8843);transform-origin:100% 50%;">13000 ms</span>
<div style="left:2487.8px;top:301.5px;width:1px;height:121px;background:#3b3b3b;"></div>
<span class="t" style="left:2416.22px;top:308.00px;font-size:15.5px;line-height:22px;color:#d0d0d0;transform:scaleX(0.8843);transform-origin:100% 50%;">14000 ms</span>
<span class="t" style="left:2518.12px;top:308.00px;font-size:15.5px;line-height:22px;color:#d0d0d0;transform:scaleX(0.8843);transform-origin:100% 50%;">15000 ms</span>
<div style="left:2556px;top:303px;width:4px;height:26px;background:#4a4a4a;"></div>
<div style="left:1062.8px;top:338.3px;width:14px;height:2.2px;background:#c8c8c8;"></div>
<div style="left:1068.3px;top:343.5px;width:3.5px;height:2px;background:#1a9be0;"></div>
<div style="left:1068.3px;top:346.6px;width:3.5px;height:2px;background:#1a9be0;"></div>
<div style="left:1068.3px;top:349.7px;width:3.5px;height:2px;background:#1a9be0;"></div>
<div style="left:1068.3px;top:352.8px;width:3.5px;height:2px;background:#1a9be0;"></div>
<div style="left:1068.3px;top:355.9px;width:3.5px;height:2px;background:#1a9be0;"></div>
<div style="left:1068.3px;top:359px;width:3.5px;height:2px;background:#1a9be0;"></div>
<div style="left:1068.3px;top:362.1px;width:3.5px;height:2px;background:#1a9be0;"></div>
<div style="left:1068.3px;top:365.2px;width:3.5px;height:2px;background:#1a9be0;"></div>
<div style="left:1076px;top:355.9px;width:3.5px;height:2px;background:#1a9be0;"></div>
<div style="left:1076px;top:359px;width:3.5px;height:2px;background:#1a9be0;"></div>
<div style="left:1076px;top:362.1px;width:3.5px;height:2px;background:#1a9be0;"></div>
<div style="left:1076px;top:365.2px;width:3.5px;height:2px;background:#1a9be0;"></div>
<div style="left:1062px;top:369px;width:29px;height:3.6px;background:#bdbdbd;"></div>
<div style="left:1091px;top:369px;width:56px;height:3.6px;background:#0acf5b;"></div>
<div style="left:2151.5px;top:338px;width:5.5px;height:3px;background:#d8d8d8;"></div>
<div style="left:2294.6px;top:338px;width:2.6px;height:2.8px;background:#d8d8d8;"></div>
<div style="left:2031.4px;top:369px;width:113px;height:3.6px;background:#0acf5b;"></div>
<div style="left:2144.4px;top:369px;width:5.6px;height:3.6px;background:#1a9be0;"></div>
<div style="left:2143px;top:373.7px;width:6px;height:3.4px;background:#0acf5b;"></div>
<div style="left:2149px;top:373.7px;width:3.5px;height:3.4px;background:#1a9be0;"></div>
<div style="left:2153px;top:378.2px;width:4.5px;height:3.4px;background:#1a9be0;"></div>
<div style="left:2152px;top:383.2px;width:1.5px;height:3.8px;background:#bdbdbd;"></div>
<div style="left:2153.5px;top:383.2px;width:40.5px;height:3.8px;background:#0b9d8f;"></div>
<div style="left:2194px;top:383.2px;width:2.5px;height:3.8px;background:#ffa000;"></div>
<div style="left:2196.5px;top:383.2px;width:2.5px;height:3.8px;background:#ab47bc;"></div>
<div style="left:2199px;top:383.2px;width:5px;height:3.8px;background:#1a9be0;"></div>
<div style="left:2152px;top:387.7px;width:1.5px;height:3.8px;background:#bdbdbd;"></div>
<div style="left:2153.5px;top:387.7px;width:40.5px;height:3.8px;background:#0b9d8f;"></div>
<div style="left:2194px;top:387.7px;width:2.5px;height:3.8px;background:#ffa000;"></div>
<div style="left:2196.5px;top:387.7px;width:2.5px;height:3.8px;background:#ab47bc;"></div>
<div style="left:2199px;top:387.7px;width:5px;height:3.8px;background:#1a9be0;"></div>
<div style="left:2152px;top:392.2px;width:1.5px;height:3.8px;background:#bdbdbd;"></div>
<div style="left:2153.5px;top:392.2px;width:40.5px;height:3.8px;background:#0b9d8f;"></div>
<div style="left:2194px;top:392.2px;width:2.5px;height:3.8px;background:#ffa000;"></div>
<div style="left:2196.5px;top:392.2px;width:2.5px;height:3.8px;background:#ab47bc;"></div>
<div style="left:2199px;top:392.2px;width:5px;height:3.8px;background:#1a9be0;"></div>
<div style="left:2155px;top:396.7px;width:1.5px;height:3.8px;background:#bdbdbd;"></div>
<div style="left:2156.5px;top:396.7px;width:37.5px;height:3.8px;background:#0b9d8f;"></div>
<div style="left:2194px;top:396.7px;width:2.5px;height:3.8px;background:#ffa000;"></div>
<div style="left:2196.5px;top:396.7px;width:2.5px;height:3.8px;background:#ab47bc;"></div>
<div style="left:2199px;top:396.7px;width:5px;height:3.8px;background:#1a9be0;"></div>
<div style="left:2155px;top:401.2px;width:1.5px;height:3.8px;background:#bdbdbd;"></div>
<div style="left:2156.5px;top:401.2px;width:37.5px;height:3.8px;background:#0b9d8f;"></div>
<div style="left:2194px;top:401.2px;width:2.5px;height:3.8px;background:#ffa000;"></div>
<div style="left:2196.5px;top:401.2px;width:2.5px;height:3.8px;background:#ab47bc;"></div>
<div style="left:2199px;top:401.2px;width:8px;height:3.8px;background:#1a9be0;"></div>
<div style="left:2294.5px;top:378.2px;width:2.8px;height:3.4px;background:#1a9be0;"></div>
<div style="left:2294px;top:391.8px;width:6px;height:3.6px;background:#0acf5b;"></div>
<div style="left:2294px;top:396.3px;width:6px;height:3.6px;background:#0b9d8f;"></div>
<div style="left:2294px;top:400.8px;width:6px;height:3.6px;background:#0acf5b;"></div>
<div style="left:1060px;top:423.5px;width:1500px;height:41px;background:#292a2d;"></div>
<div style="left:1060px;top:464px;width:1500px;height:1px;background:#444548;"></div>
<span class="t" style="left:1067.70px;top:431.50px;font-size:18px;line-height:25px;color:#e0e1e3;">Name</span>
<span class="t" style="left:1513.00px;top:431.50px;font-size:18px;line-height:25px;color:#e0e1e3;transform:scaleX(0.9406);transform-origin:0 50%;">Status</span>
<span class="t" style="left:1646.00px;top:431.50px;font-size:18px;line-height:25px;color:#e0e1e3;transform:scaleX(0.9480);transform-origin:0 50%;">Type</span>
<span class="t" style="left:1778.70px;top:431.50px;font-size:18px;line-height:25px;color:#e0e1e3;transform:scaleX(1.0503);transform-origin:0 50%;">Initiator</span>
<span class="t" style="left:2000.40px;top:431.50px;font-size:18px;line-height:25px;color:#e0e1e3;transform:scaleX(0.8996);transform-origin:0 50%;">Size</span>
<span class="t" style="left:2132.00px;top:431.50px;font-size:18px;line-height:25px;color:#e0e1e3;transform:scaleX(0.9913);transform-origin:0 50%;">Time</span>
<span class="t" style="left:2266.00px;top:431.50px;font-size:18px;line-height:25px;color:#e0e1e3;transform:scaleX(1.0091);transform-origin:0 50%;">Waterfall</span>
<svg style="left:2530px;top:436px;" width="16" height="14" viewBox="0 0 16 14"><path d="M2 12h12l-6-10z" fill="#929292"/></svg>
<div class="clip" style="left:1060px;top:465px;width:1500px;height:980.500px">
<div style="left:0px;top:-11.5px;width:1479px;height:32px;background:#242424;"></div>
<svg style="left:12px;top:-4.9px;" width="16" height="21" viewBox="0 0 16 21"><rect x="0.500" y="0.500" width="15" height="20" rx="1" fill="#fdfdfd"/></svg>
<svg style="left:12px;top:-4.9px;" width="16" height="21" viewBox="0 0 16 21"><circle cx="8" cy="9" r="4.200" fill="#8a8a8a"/><circle cx="8" cy="8" r="1.500" fill="#cfcfcf"/></svg>
<span class="t" style="left:36.20px;top:-6.90px;font-size:18px;line-height:25px;color:#efefef;transform:scaleX(1.0110);transform-origin:0 50%;">center.png</span>
<span class="t" style="left:452.70px;top:-6.90px;font-size:18px;line-height:25px;color:#efefef;transform:scaleX(0.9818);transform-origin:0 50%;">304</span>
<span class="t" style="left:585.90px;top:-6.90px;font-size:18px;line-height:25px;color:#efefef;transform:scaleX(1.0317);transform-origin:0 50%;">png</span>
<span class="t" style="left:719.20px;top:-6.90px;font-size:18px;line-height:25px;color:#efefef;transform:scaleX(1.0071);transform-origin:0 50%;text-decoration:underline;text-underline-offset:2px;">:65185/static/center.png</span>
<span class="t" style="left:1021.67px;top:-6.90px;font-size:18px;line-height:25px;color:#efefef;">90 B</span>
<span class="t" style="left:1153.38px;top:-6.90px;font-size:18px;line-height:25px;color:#efefef;">9 ms</span>
<div style="left:0px;top:20.5px;width:1479px;height:32px;background:#2a2a2a;"></div>
<svg style="left:12px;top:27.1px;" width="16" height="21" viewBox="0 0 16 21"><rect x="0.500" y="0.500" width="15" height="20" rx="1" fill="#fdfdfd"/></svg>
<svg style="left:12px;top:27.1px;" width="16" height="21" viewBox="0 0 16 21"><rect x="2" y="8" width="12" height="4.500" fill="#2a2118"/><rect x="5" y="9" width="5" height="2" fill="#b98b4a"/></svg>
<span class="t" style="left:36.20px;top:25.10px;font-size:18px;line-height:25px;color:#efefef;transform:scaleX(1.0170);transform-origin:0 50%;">bg.png</span>
<span class="t" style="left:452.70px;top:25.10px;font-size:18px;line-height:25px;color:#efefef;transform:scaleX(0.9818);transform-origin:0 50%;">304</span>
<span class="t" style="left:585.90px;top:25.10px;font-size:18px;line-height:25px;color:#efefef;transform:scaleX(1.0317);transform-origin:0 50%;">png</span>
<span class="t" style="left:719.20px;top:25.10px;font-size:18px;line-height:25px;color:#efefef;transform:scaleX(1.0116);transform-origin:0 50%;text-decoration:underline;text-underline-offset:2px;">:65185/static/bg.png</span>
<span class="t" style="left:1021.67px;top:25.10px;font-size:18px;line-height:25px;color:#efefef;">90 B</span>
<span class="t" style="left:1144.71px;top:25.10px;font-size:18px;line-height:25px;color:#efefef;">11 ms</span>
<div style="left:0px;top:52.5px;width:1479px;height:32px;background:#242424;"></div>
<svg style="left:12px;top:59.1px;" width="16" height="21" viewBox="0 0 16 21"><rect x="0.500" y="0.500" width="15" height="20" rx="1" fill="#fdfdfd"/></svg>
<svg style="left:12px;top:59.1px;" width="16" height="21" viewBox="0 0 16 21"><circle cx="8" cy="10.500" r="5.500" fill="#f08a24"/><path d="M4.500 9h7M4.500 11.500h7" stroke="#f9c27a" stroke-width="1"/></svg>
<span class="t" style="left:36.20px;top:57.10px;font-size:18px;line-height:25px;color:#efefef;transform:scaleX(1.0133);transform-origin:0 50%;">logo_ruiji.png</span>
<span class="t" style="left:452.70px;top:57.10px;font-size:18px;line-height:25px;color:#efefef;transform:scaleX(0.9818);transform-origin:0 50%;">304</span>
<span class="t" style="left:585.90px;top:57.10px;font-size:18px;line-height:25px;color:#efefef;transform:scaleX(1.0317);transform-origin:0 50%;">png</span>
<span class="t" style="left:719.20px;top:57.10px;font-size:18px;line-height:25px;color:#efefef;transform:scaleX(0.9944);transform-origin:0 50%;text-decoration:underline;text-underline-offset:2px;">:65185/static/logo_ruiji....</span>
<span class="t" style="left:1021.67px;top:57.10px;font-size:18px;line-height:25px;color:#efefef;">90 B</span>
<span class="t" style="left:1143.37px;top:57.10px;font-size:18px;line-height:25px;color:#efefef;">12 ms</span>
<div style="left:0px;top:84.5px;width:1479px;height:32px;background:#2a2a2a;"></div>
<svg style="left:12px;top:91.1px;" width="16" height="21" viewBox="0 0 16 21"><rect x="0.500" y="0.500" width="15" height="20" rx="1" fill="#fdfdfd"/></svg>
<svg style="left:12px;top:91.1px;" width="16" height="21" viewBox="0 0 16 21"><circle cx="8" cy="10.500" r="5" fill="#fdbf14"/><path d="M8 8v3l2 1" stroke="#6b4a00" stroke-width="1.200" fill="none"/></svg>
<span class="t" style="left:36.20px;top:89.10px;font-size:18px;line-height:25px;color:#efefef;transform:scaleX(1.0229);transform-origin:0 50%;">length.png</span>
<span class="t" style="left:452.70px;top:89.10px;font-size:18px;line-height:25px;color:#efefef;transform:scaleX(0.9818);transform-origin:0 50%;">304</span>
<span class="t" style="left:585.90px;top:89.10px;font-size:18px;line-height:25px;color:#efefef;transform:scaleX(1.0317);transform-origin:0 50%;">png</span>
<span class="t" style="left:719.20px;top:89.10px;font-size:18px;line-height:25px;color:#efefef;transform:scaleX(1.0149);transform-origin:0 50%;text-decoration:underline;text-underline-offset:2px;">:65185/static/length.png</span>
<span class="t" style="left:1021.67px;top:89.10px;font-size:18px;line-height:25px;color:#efefef;">90 B</span>
<span class="t" style="left:1143.37px;top:89.10px;font-size:18px;line-height:25px;color:#efefef;">10 ms</span>
<div style="left:0px;top:116.5px;width:1479px;height:32px;background:#242424;"></div>
<svg style="left:12px;top:123.1px;" width="16" height="21" viewBox="0 0 16 21"><rect x="0.500" y="0.500" width="15" height="20" rx="1" fill="#fdfdfd"/></svg>
<svg style="left:12px;top:123.1px;" width="16" height="21" viewBox="0 0 16 21"><circle cx="8" cy="10.500" r="5" fill="#fdbf14"/><path d="M6.500 8.500l1.500 2 1.500-2M8 10.500v3M6.500 11.500h3" stroke="#6b4a00" stroke-width="1" fill="none"/></svg>
<span class="t" style="left:36.20px;top:121.10px;font-size:18px;line-height:25px;color:#efefef;transform:scaleX(1.0201);transform-origin:0 50%;">money.png</span>
<span class="t" style="left:452.70px;top:121.10px;font-size:18px;line-height:25px;color:#efefef;transform:scaleX(0.9818);transform-origin:0 50%;">304</span>
<span class="t" style="left:585.90px;top:121.10px;font-size:18px;line-height:25px;color:#efefef;transform:scaleX(1.0317);transform-origin:0 50%;">png</span>
<span class="t" style="left:719.20px;top:121.10px;font-size:18px;line-height:25px;color:#efefef;transform:scaleX(1.0139);transform-origin:0 50%;text-decoration:underline;text-underline-offset:2px;">:65185/static/money.png</span>
<span class="t" style="left:1021.67px;top:121.10px;font-size:18px;line-height:25px;color:#efefef;">90 B</span>
<span class="t" style="left:1144.71px;top:121.10px;font-size:18px;line-height:25px;color:#efefef;">11 ms</span>
<div style="left:0px;top:148.5px;width:1479px;height:32px;background:#2a2a2a;"></div>
<svg style="left:12px;top:155.1px;" width="16" height="21" viewBox="0 0 16 21"><rect x="0.500" y="0.500" width="15" height="20" rx="1" fill="#fdfdfd"/></svg>
<svg style="left:12px;top:155.1px;" width="16" height="21" viewBox="0 0 16 21"><circle cx="8" cy="10.500" r="5" fill="#fdbf14"/><path d="M10.500 8.500l-4.500 1.800 2.200 0.500 0.500 2.200z" fill="#5c3f00"/></svg>
<span class="t" style="left:36.20px;top:153.10px;font-size:18px;line-height:25px;color:#efefef;transform:scaleX(1.0210);transform-origin:0 50%;">time.png</span>
<span class="t" style="left:452.70px;top:153.10px;font-size:18px;line-height:25px;color:#efefef;transform:scaleX(0.9818);transform-origin:0 50%;">304</span>
<span class="t" style="left:585.90px;top:153.10px;font-size:18px;line-height:25px;color:#efefef;transform:scaleX(1.0317);transform-origin:0 50%;">png</span>
<span class="t" style="left:719.20px;top:153.10px;font-size:18px;line-height:25px;color:#efefef;transform:scaleX(1.0136);transform-origin:0 50%;text-decoration:underline;text-underline-offset:2px;">:65185/static/time.png</span>
<span class="t" style="left:1021.67px;top:153.10px;font-size:18px;line-height:25px;color:#efefef;">90 B</span>
<span class="t" style="left:1144.71px;top:153.10px;font-size:18px;line-height:25px;color:#efefef;">11 ms</span>
<div style="left:0px;top:180.5px;width:1479px;height:32px;background:#242424;"></div>
<svg style="left:12px;top:187.1px;" width="16" height="21" viewBox="0 0 16 21"><rect x="0.500" y="0.500" width="15" height="20" rx="1" fill="#fdfdfd"/></svg>
<svg style="left:12px;top:187.1px;" width="16" height="21" viewBox="0 0 16 21"><circle cx="8" cy="7" r="2" fill="#f0c030"/><path d="M5 9h5l1.500 4h-7z" fill="#e8b020"/><path d="M2.500 13h11v2.500h-11z" fill="#e02020"/><circle cx="4.500" cy="16" r="1.500" fill="#222"/><circle cx="12" cy="16" r="1.500" fill="#222"/></svg>
<span class="t" style="left:36.20px;top:185.10px;font-size:18px;line-height:25px;color:#efefef;transform:scaleX(0.9728);transform-origin:0 50%;">btn_waiter_sel.png</span>
<span class="t" style="left:452.70px;top:185.10px;font-size:18px;line-height:25px;color:#efefef;transform:scaleX(0.9818);transform-origin:0 50%;">304</span>
<span class="t" style="left:585.90px;top:185.10px;font-size:18px;line-height:25px;color:#efefef;transform:scaleX(1.0317);transform-origin:0 50%;">png</span>
<span class="t" style="left:719.20px;top:185.10px;font-size:18px;line-height:25px;color:#efefef;transform:scaleX(0.9969);transform-origin:0 50%;text-decoration:underline;text-underline-offset:2px;">:65185/static/btn_waiter...</span>
<span class="t" style="left:1021.67px;top:185.10px;font-size:18px;line-height:25px;color:#efefef;">90 B</span>
<span class="t" style="left:1143.37px;top:185.10px;font-size:18px;line-height:25px;color:#efefef;">16 ms</span>
<div style="left:0px;top:212.5px;width:1479px;height:32px;background:#2a2a2a;"></div>
<svg style="left:12px;top:219.1px;" width="16" height="21" viewBox="0 0 16 21"><rect x="0.500" y="0.500" width="15" height="20" rx="1" fill="#fdfdfd"/></svg>
<svg style="left:12px;top:219.1px;" width="16" height="21" viewBox="0 0 16 21"><circle cx="8" cy="7" r="2" fill="#8a8a8a"/><path d="M5 9h5l1.500 4h-7z" fill="#9a9a9a"/><path d="M2.500 13h11v2.500h-11z" fill="#777"/><circle cx="4.500" cy="16" r="1.500" fill="#333"/><circle cx="12" cy="16" r="1.500" fill="#333"/></svg>
<span class="t" style="left:36.20px;top:217.10px;font-size:18px;line-height:25px;color:#efefef;transform:scaleX(0.9959);transform-origin:0 50%;">btn_waiter_nor.png</span>
<span class="t" style="left:452.70px;top:217.10px;font-size:18px;line-height:25px;color:#efefef;transform:scaleX(0.9818);transform-origin:0 50%;">304</span>
<span class="t" style="left:585.90px;top:217.10px;font-size:18px;line-height:25px;color:#efefef;transform:scaleX(1.0317);transform-origin:0 50%;">png</span>
<span class="t" style="left:719.20px;top:217.10px;font-size:18px;line-height:25px;color:#efefef;transform:scaleX(0.9969);transform-origin:0 50%;text-decoration:underline;text-underline-offset:2px;">:65185/static/btn_waiter...</span>
<span class="t" style="left:1021.67px;top:217.10px;font-size:18px;line-height:25px;color:#efefef;">90 B</span>
<span class="t" style="left:1153.38px;top:217.10px;font-size:18px;line-height:25px;color:#efefef;">8 ms</span>
<div style="left:0px;top:244.5px;width:1479px;height:32px;background:#242424;"></div>
<svg style="left:12px;top:251.1px;" width="16" height="21" viewBox="0 0 16 21"><rect x="0.500" y="0.500" width="15" height="20" rx="1" fill="#fdfdfd"/></svg>
<svg style="left:12px;top:251.1px;" width="16" height="21" viewBox="0 0 16 21"><circle cx="8" cy="10.500" r="5.200" fill="#7a7a7a"/><circle cx="8" cy="10.500" r="2" fill="#a0a0a0"/></svg>
<span class="t" style="left:36.20px;top:249.10px;font-size:18px;line-height:25px;color:#efefef;transform:scaleX(0.9813);transform-origin:0 50%;">but_close.png</span>
<span class="t" style="left:452.70px;top:249.10px;font-size:18px;line-height:25px;color:#efefef;transform:scaleX(0.9818);transform-origin:0 50%;">304</span>
<span class="t" style="left:585.90px;top:249.10px;font-size:18px;line-height:25px;color:#efefef;transform:scaleX(1.0317);transform-origin:0 50%;">png</span>
<span class="t" style="left:719.20px;top:249.10px;font-size:18px;line-height:25px;color:#efefef;transform:scaleX(0.9797);transform-origin:0 50%;text-decoration:underline;text-underline-offset:2px;">:65185/static/but_close....</span>
<span class="t" style="left:1021.67px;top:249.10px;font-size:18px;line-height:25px;color:#efefef;">90 B</span>
<span class="t" style="left:1143.37px;top:249.10px;font-size:18px;line-height:25px;color:#efefef;">20 ms</span>
<div style="left:0px;top:276.5px;width:1479px;height:32px;background:#2a2a2a;"></div>
<svg style="left:12px;top:283.1px;" width="16" height="21" viewBox="0 0 16 21"><rect x="0.500" y="0.500" width="15" height="20" rx="1" fill="#fdfdfd"/></svg>
<svg style="left:12px;top:283.1px;" width="16" height="21" viewBox="0 0 16 21"><path d="M4.500 8h7v6.500h-7zM3.500 8h9M6.500 6.500h3M7 10v3M9 10v3" stroke="#c4c4c4" stroke-width="0.900" fill="none"/></svg>
<span class="t" style="left:36.20px;top:281.10px;font-size:18px;line-height:25px;color:#efefef;">clear.png</span>
<span class="t" style="left:452.70px;top:281.10px;font-size:18px;line-height:25px;color:#efefef;transform:scaleX(0.9818);transform-origin:0 50%;">304</span>
<span class="t" style="left:585.90px;top:281.10px;font-size:18px;line-height:25px;color:#efefef;transform:scaleX(1.0317);transform-origin:0 50%;">png</span>
<span class="t" style="left:719.20px;top:281.10px;font-size:18px;line-height:25px;color:#efefef;text-decoration:underline;text-underline-offset:2px;">:65185/static/clear.png</span>
<span class="t" style="left:1021.67px;top:281.10px;font-size:18px;line-height:25px;color:#efefef;">90 B</span>
<span class="t" style="left:1143.37px;top:281.10px;font-size:18px;line-height:25px;color:#efefef;">20 ms</span>
<div style="left:0px;top:308.5px;width:1479px;height:32px;background:#242424;"></div>
<svg style="left:12px;top:314.6px;" width="22" height="22" viewBox="0 0 22 22"><rect x="2.500" y="1" width="15" height="18" fill="#f4f4f4" stroke="#b8b8b8" stroke-width="1"/><path d="M1 3.500V21h15" stroke="#d8d8d8" stroke-width="1.500" fill="none"/><rect x="4.500" y="3.500" width="12" height="13" fill="#a9c7f0"/><path d="M4.500 12c2-3 4-4 6-3s4 0 6-1v8.500h-12z" fill="#e8f0fb"/><path d="M3 19c3-5 9-6.500 14-4v6H3z" fill="#4caf50"/></svg>
<span class="t" style="left:36.20px;top:313.10px;font-size:18px;line-height:25px;color:#efefef;transform:scaleX(1.0478);transform-origin:0 50%;">lodding.gif</span>
<span class="t" style="left:452.70px;top:313.10px;font-size:18px;line-height:25px;color:#efefef;transform:scaleX(0.9818);transform-origin:0 50%;">304</span>
<span class="t" style="left:585.90px;top:313.10px;font-size:18px;line-height:25px;color:#efefef;transform:scaleX(1.0549);transform-origin:0 50%;">text/plain</span>
<span class="t" style="left:719.20px;top:313.10px;font-size:18px;line-height:25px;color:#efefef;transform:scaleX(1.0257);transform-origin:0 50%;text-decoration:underline;text-underline-offset:2px;">:65185/static/lodding.gif</span>
<span class="t" style="left:1021.67px;top:313.10px;font-size:18px;line-height:25px;color:#efefef;">90 B</span>
<span class="t" style="left:1143.37px;top:313.10px;font-size:18px;line-height:25px;color:#efefef;">19 ms</span>
<div style="left:0px;top:340.5px;width:1479px;height:32px;background:#2a2a2a;"></div>
<svg style="left:12px;top:347.1px;" width="16" height="21" viewBox="0 0 16 21"><rect x="0.500" y="0.500" width="15" height="20" rx="1" fill="#fdfdfd"/></svg>
<span class="t" style="left:36.20px;top:345.10px;font-size:18px;line-height:25px;color:#efefef;transform:scaleX(1.0518);transform-origin:0 50%;">login</span>
<span class="t" style="left:452.70px;top:345.10px;font-size:18px;line-height:25px;color:#efefef;transform:scaleX(0.9818);transform-origin:0 50%;">200</span>
<span class="t" style="left:585.90px;top:345.10px;font-size:18px;line-height:25px;color:#efefef;">xhr</span>
<span class="t" style="left:719.20px;top:345.10px;font-size:18px;line-height:25px;color:#efefef;transform:scaleX(0.9468);transform-origin:0 50%;text-decoration:underline;text-underline-offset:2px;">index.js:1</span>
<span class="t" style="left:1011.65px;top:345.10px;font-size:18px;line-height:25px;color:#efefef;">363 B</span>
<span class="t" style="left:1143.35px;top:345.10px;font-size:18px;line-height:25px;color:#efefef;">1.09 s</span>
<div style="left:0px;top:372.5px;width:1479px;height:32px;background:#242424;"></div>
<svg style="left:12px;top:379.1px;" width="16" height="21" viewBox="0 0 16 21"><rect x="0.500" y="0.500" width="15" height="20" rx="1" fill="#fdfdfd"/></svg>
<span class="t" style="left:36.20px;top:377.10px;font-size:18px;line-height:25px;color:#efefef;transform:scaleX(1.0227);transform-origin:0 50%;">list</span>
<span class="t" style="left:452.70px;top:377.10px;font-size:18px;line-height:25px;color:#efefef;transform:scaleX(0.9818);transform-origin:0 50%;">200</span>
<span class="t" style="left:585.90px;top:377.10px;font-size:18px;line-height:25px;color:#efefef;">xhr</span>
<span class="t" style="left:719.20px;top:377.10px;font-size:18px;line-height:25px;color:#efefef;transform:scaleX(0.9468);transform-origin:0 50%;text-decoration:underline;text-underline-offset:2px;">index.js:1</span>
<span class="t" style="left:1007.67px;top:377.10px;font-size:18px;line-height:25px;color:#efefef;">1.6 kB</span>
<span class="t" style="left:1143.37px;top:377.10px;font-size:18px;line-height:25px;color:#efefef;">50 ms</span>
<div style="left:0px;top:404.5px;width:1479px;height:32px;background:#2a2a2a;"></div>
<svg style="left:12px;top:411.1px;" width="16" height="21" viewBox="0 0 16 21"><rect x="0.500" y="0.500" width="15" height="20" rx="1" fill="#fdfdfd"/></svg>
<span class="t" style="left:36.20px;top:409.10px;font-size:18px;line-height:25px;color:#efefef;transform:scaleX(1.0227);transform-origin:0 50%;">list</span>
<span class="t" style="left:452.70px;top:409.10px;font-size:18px;line-height:25px;color:#efefef;transform:scaleX(0.9818);transform-origin:0 50%;">200</span>
<span class="t" style="left:585.90px;top:409.10px;font-size:18px;line-height:25px;color:#efefef;">xhr</span>
<span class="t" style="left:719.20px;top:409.10px;font-size:18px;line-height:25px;color:#efefef;transform:scaleX(0.9468);transform-origin:0 50%;text-decoration:underline;text-underline-offset:2px;">index.js:1</span>
<span class="t" style="left:1007.67px;top:409.10px;font-size:18px;line-height:25px;color:#efefef;">1.2 kB</span>
<span class="t" style="left:1143.37px;top:409.10px;font-size:18px;line-height:25px;color:#efefef;">49 ms</span>
<div style="left:0px;top:436.5px;width:1479px;height:32px;background:#242424;"></div>
<svg style="left:12px;top:443.1px;" width="16" height="21" viewBox="0 0 16 21"><rect x="0.500" y="0.500" width="15" height="20" rx="1" fill="#fdfdfd"/></svg>
<span class="t" style="left:36.20px;top:441.10px;font-size:18px;line-height:25px;color:#efefef;">list?categoryId=16</span>
<span class="t" style="left:452.70px;top:441.10px;font-size:18px;line-height:25px;color:#efefef;transform:scaleX(0.9818);transform-origin:0 50%;">200</span>
<span class="t" style="left:585.90px;top:441.10px;font-size:18px;line-height:25px;color:#efefef;">xhr</span>
<span class="t" style="left:719.20px;top:441.10px;font-size:18px;line-height:25px;color:#efefef;transform:scaleX(0.9468);transform-origin:0 50%;text-decoration:underline;text-underline-offset:2px;">index.js:1</span>
<span class="t" style="left:1007.67px;top:441.10px;font-size:18px;line-height:25px;color:#efefef;">1.3 kB</span>
<span class="t" style="left:1143.37px;top:441.10px;font-size:18px;line-height:25px;color:#efefef;">17 ms</span>
<div style="left:0px;top:468.5px;width:1479px;height:32px;background:#2a2a2a;"></div>
<svg style="left:12px;top:474.6px;" width="22" height="22" viewBox="0 0 22 22"><rect x="2.500" y="1" width="15" height="18" fill="#f4f4f4" stroke="#b8b8b8" stroke-width="1"/><path d="M1 3.500V21h15" stroke="#d8d8d8" stroke-width="1.500" fill="none"/><rect x="4.500" y="3.500" width="12" height="13" fill="#a9c7f0"/><path d="M4.500 12c2-3 4-4 6-3s4 0 6-1v8.500h-12z" fill="#e8f0fb"/><path d="M3 19c3-5 9-6.500 14-4v6H3z" fill="#4caf50"/></svg>
<span class="t" style="left:36.20px;top:473.10px;font-size:18px;line-height:25px;color:#efefef;transform:scaleX(0.9728);transform-origin:0 50%;">btn_waiter_sel.png</span>
<span class="t" style="left:452.70px;top:473.10px;font-size:18px;line-height:25px;color:#efefef;transform:scaleX(0.9818);transform-origin:0 50%;">307</span>
<span class="t" style="left:585.90px;top:473.10px;font-size:18px;line-height:25px;color:#efefef;">/ Redirect</span>
<span class="t" style="left:719.20px;top:473.10px;font-size:18px;line-height:25px;color:#efefef;transform:scaleX(0.9506);transform-origin:0 50%;text-decoration:underline;text-underline-offset:2px;">:65185/__pageframe__/p...</span>
<span class="t" style="left:1031.67px;top:473.10px;font-size:18px;line-height:25px;color:#efefef;">0 B</span>
<span class="t" style="left:1153.38px;top:473.10px;font-size:18px;line-height:25px;color:#efefef;">9 ms</span>
<div style="left:0px;top:500.5px;width:1479px;height:32px;background:#242424;"></div>
<svg style="left:12px;top:507.1px;" width="16" height="21" viewBox="0 0 16 21"><rect x="0.500" y="0.500" width="15" height="20" rx="1" fill="#fdfdfd"/></svg>
<span class="t" style="left:36.20px;top:505.10px;font-size:18px;line-height:25px;color:#efefef;transform:scaleX(0.9938);transform-origin:0 50%;">btn_red.png</span>
<span class="t" style="left:452.70px;top:505.10px;font-size:18px;line-height:25px;color:#efefef;transform:scaleX(0.9818);transform-origin:0 50%;">307</span>
<span class="t" style="left:585.90px;top:505.10px;font-size:18px;line-height:25px;color:#efefef;">/ Redirect</span>
<span class="t" style="left:719.20px;top:505.10px;font-size:18px;line-height:25px;color:#bdbdbd;transform:scaleX(1.0171);transform-origin:0 50%;">Other</span>
<span class="t" style="left:1031.67px;top:505.10px;font-size:18px;line-height:25px;color:#efefef;">0 B</span>
<span class="t" style="left:1153.38px;top:505.10px;font-size:18px;line-height:25px;color:#efefef;">2 ms</span>
<div style="left:0px;top:532.5px;width:1479px;height:32px;background:#2a2a2a;"></div>
<svg style="left:12px;top:539.1px;" width="16" height="21" viewBox="0 0 16 21"><rect x="0.500" y="0.500" width="15" height="20" rx="1" fill="#fdfdfd"/></svg>
<span class="t" style="left:36.20px;top:537.10px;font-size:18px;line-height:25px;color:#efefef;transform:scaleX(0.9939);transform-origin:0 50%;">btn_add.png</span>
<span class="t" style="left:452.70px;top:537.10px;font-size:18px;line-height:25px;color:#efefef;transform:scaleX(0.9818);transform-origin:0 50%;">307</span>
<span class="t" style="left:585.90px;top:537.10px;font-size:18px;line-height:25px;color:#efefef;">/ Redirect</span>
<span class="t" style="left:719.20px;top:537.10px;font-size:18px;line-height:25px;color:#bdbdbd;transform:scaleX(1.0171);transform-origin:0 50%;">Other</span>
<span class="t" style="left:1031.67px;top:537.10px;font-size:18px;line-height:25px;color:#efefef;">0 B</span>
<span class="t" style="left:1143.37px;top:537.10px;font-size:18px;line-height:25px;color:#efefef;">26 ms</span>
<div style="left:0px;top:564.5px;width:1479px;height:32px;background:#242424;"></div>
<svg style="left:12px;top:570.6px;" width="22" height="22" viewBox="0 0 22 22"><rect x="2.500" y="1" width="15" height="18" fill="#f4f4f4" stroke="#b8b8b8" stroke-width="1"/><path d="M1 3.500V21h15" stroke="#d8d8d8" stroke-width="1.500" fill="none"/><rect x="4.500" y="3.500" width="12" height="13" fill="#a9c7f0"/><path d="M4.500 12c2-3 4-4 6-3s4 0 6-1v8.500h-12z" fill="#e8f0fb"/><path d="M3 19c3-5 9-6.500 14-4v6H3z" fill="#4caf50"/></svg>
<span class="t" style="left:36.20px;top:569.10px;font-size:18px;line-height:25px;color:#e8503e;transform:scaleX(0.9909);transform-origin:0 50%;">7a55b845-1f2b-41fa-9486-76d187ee9ee1.png</span>
<span class="t" style="left:452.70px;top:569.10px;font-size:18px;line-height:25px;color:#e8503e;transform:scaleX(0.9818);transform-origin:0 50%;">403</span>
<span class="t" style="left:585.90px;top:569.10px;font-size:18px;line-height:25px;color:#e8503e;transform:scaleX(0.9286);transform-origin:0 50%;">xml</span>
<span class="t" style="left:719.20px;top:569.10px;font-size:18px;line-height:25px;color:#bdbdbd;transform:scaleX(1.0171);transform-origin:0 50%;">Other</span>
<span class="t" style="left:1011.65px;top:569.10px;font-size:18px;line-height:25px;color:#e8503e;">334 B</span>
<span class="t" style="left:1133.37px;top:569.10px;font-size:18px;line-height:25px;color:#e8503e;">484 ms</span>
<div style="left:0px;top:596.5px;width:1479px;height:32px;background:#2a2a2a;"></div>
<svg style="left:12px;top:602.6px;" width="22" height="22" viewBox="0 0 22 22"><rect x="2.500" y="1" width="15" height="18" fill="#f4f4f4" stroke="#b8b8b8" stroke-width="1"/><path d="M1 3.500V21h15" stroke="#d8d8d8" stroke-width="1.500" fill="none"/><rect x="4.500" y="3.500" width="12" height="13" fill="#a9c7f0"/><path d="M4.500 12c2-3 4-4 6-3s4 0 6-1v8.500h-12z" fill="#e8f0fb"/><path d="M3 19c3-5 9-6.500 14-4v6H3z" fill="#4caf50"/></svg>
<span class="t" style="left:36.20px;top:601.10px;font-size:18px;line-height:25px;color:#e8503e;transform:scaleX(0.9843);transform-origin:0 50%;">f5ac8455-4793-450c-97ba-173795c34626.png</span>
<span class="t" style="left:452.70px;top:601.10px;font-size:18px;line-height:25px;color:#e8503e;transform:scaleX(0.9818);transform-origin:0 50%;">403</span>
<span class="t" style="left:585.90px;top:601.10px;font-size:18px;line-height:25px;color:#e8503e;transform:scaleX(0.9286);transform-origin:0 50%;">xml</span>
<span class="t" style="left:719.20px;top:601.10px;font-size:18px;line-height:25px;color:#bdbdbd;transform:scaleX(1.0171);transform-origin:0 50%;">Other</span>
<span class="t" style="left:1011.65px;top:601.10px;font-size:18px;line-height:25px;color:#e8503e;">334 B</span>
<span class="t" style="left:1133.37px;top:601.10px;font-size:18px;line-height:25px;color:#e8503e;">486 ms</span>
<div style="left:0px;top:628.5px;width:1479px;height:32px;background:#242424;"></div>
<svg style="left:12px;top:634.6px;" width="22" height="22" viewBox="0 0 22 22"><rect x="2.500" y="1" width="15" height="18" fill="#f4f4f4" stroke="#b8b8b8" stroke-width="1"/><path d="M1 3.500V21h15" stroke="#d8d8d8" stroke-width="1.500" fill="none"/><rect x="4.500" y="3.500" width="12" height="13" fill="#a9c7f0"/><path d="M4.500 12c2-3 4-4 6-3s4 0 6-1v8.500h-12z" fill="#e8f0fb"/><path d="M3 19c3-5 9-6.500 14-4v6H3z" fill="#4caf50"/></svg>
<span class="t" style="left:36.20px;top:633.10px;font-size:18px;line-height:25px;color:#e8503e;transform:scaleX(0.9857);transform-origin:0 50%;">8cfcc576-4b66-4a09-ac68-ad5b273c2590.png</span>
<span class="t" style="left:452.70px;top:633.10px;font-size:18px;line-height:25px;color:#e8503e;transform:scaleX(0.9818);transform-origin:0 50%;">403</span>
<span class="t" style="left:585.90px;top:633.10px;font-size:18px;line-height:25px;color:#e8503e;transform:scaleX(0.9286);transform-origin:0 50%;">xml</span>
<span class="t" style="left:719.20px;top:633.10px;font-size:18px;line-height:25px;color:#bdbdbd;transform:scaleX(1.0171);transform-origin:0 50%;">Other</span>
<span class="t" style="left:1011.65px;top:633.10px;font-size:18px;line-height:25px;color:#e8503e;">334 B</span>
<span class="t" style="left:1133.37px;top:633.10px;font-size:18px;line-height:25px;color:#e8503e;">486 ms</span>
<div style="left:0px;top:660.5px;width:1479px;height:32px;background:#2a2a2a;"></div>
<svg style="left:12px;top:667.1px;" width="16" height="21" viewBox="0 0 16 21"><rect x="0.500" y="0.500" width="15" height="20" rx="1" fill="#fdfdfd"/></svg>
<svg style="left:12px;top:667.1px;" width="16" height="21" viewBox="0 0 16 21"><circle cx="8" cy="7" r="2" fill="#f0c030"/><path d="M5 9h5l1.500 4h-7z" fill="#e8b020"/><path d="M2.500 13h11v2.500h-11z" fill="#e02020"/><circle cx="4.500" cy="16" r="1.500" fill="#222"/><circle cx="12" cy="16" r="1.500" fill="#222"/></svg>
<span class="t" style="left:36.20px;top:665.10px;font-size:18px;line-height:25px;color:#efefef;transform:scaleX(0.9728);transform-origin:0 50%;">btn_waiter_sel.png</span>
<span class="t" style="left:452.70px;top:665.10px;font-size:18px;line-height:25px;color:#efefef;transform:scaleX(0.9818);transform-origin:0 50%;">304</span>
<span class="t" style="left:585.90px;top:665.10px;font-size:18px;line-height:25px;color:#efefef;transform:scaleX(1.0317);transform-origin:0 50%;">png</span>
<span class="t" style="left:719.20px;top:665.10px;font-size:18px;line-height:25px;color:#efefef;transform:scaleX(0.9969);transform-origin:0 50%;text-decoration:underline;text-underline-offset:2px;">:65185/static/btn_waiter...</span>
<span class="t" style="left:1021.67px;top:665.10px;font-size:18px;line-height:25px;color:#efefef;">90 B</span>
<span class="t" style="left:1153.38px;top:665.10px;font-size:18px;line-height:25px;color:#efefef;">7 ms</span>
<div style="left:0px;top:692.5px;width:1479px;height:32px;background:#242424;"></div>
<svg style="left:12px;top:699.1px;" width="16" height="21" viewBox="0 0 16 21"><rect x="0.500" y="0.500" width="15" height="20" rx="1" fill="#fdfdfd"/></svg>
<svg style="left:12px;top:699.1px;" width="16" height="21" viewBox="0 0 16 21"><circle cx="8" cy="10.500" r="3.800" fill="none" stroke="#f5d36a" stroke-width="1"/><path d="M6.500 10.500h3" stroke="#f0c94a" stroke-width="1"/></svg>
<span class="t" style="left:36.20px;top:697.10px;font-size:18px;line-height:25px;color:#efefef;transform:scaleX(0.9938);transform-origin:0 50%;">btn_red.png</span>
<span class="t" style="left:452.70px;top:697.10px;font-size:18px;line-height:25px;color:#efefef;transform:scaleX(0.9818);transform-origin:0 50%;">304</span>
<span class="t" style="left:585.90px;top:697.10px;font-size:18px;line-height:25px;color:#efefef;transform:scaleX(1.0317);transform-origin:0 50%;">png</span>
<span class="t" style="left:719.20px;top:697.10px;font-size:18px;line-height:25px;color:#efefef;text-decoration:underline;text-underline-offset:2px;">:65185/static/btn_red.png</span>
<span class="t" style="left:1021.67px;top:697.10px;font-size:18px;line-height:25px;color:#efefef;">90 B</span>
<span class="t" style="left:1153.38px;top:697.10px;font-size:18px;line-height:25px;color:#efefef;">6 ms</span>
<div style="left:0px;top:724.5px;width:1479px;height:32px;background:#2a2a2a;"></div>
<svg style="left:12px;top:730.6px;" width="22" height="22" viewBox="0 0 22 22"><rect x="2.500" y="1" width="15" height="18" fill="#f4f4f4" stroke="#b8b8b8" stroke-width="1"/><path d="M1 3.500V21h15" stroke="#d8d8d8" stroke-width="1.500" fill="none"/><rect x="4.500" y="3.500" width="12" height="13" fill="#a9c7f0"/><path d="M4.500 12c2-3 4-4 6-3s4 0 6-1v8.500h-12z" fill="#e8f0fb"/><path d="M3 19c3-5 9-6.500 14-4v6H3z" fill="#4caf50"/></svg>
<span class="t" style="left:36.20px;top:729.10px;font-size:18px;line-height:25px;color:#e8503e;transform:scaleX(0.9882);transform-origin:0 50%;">a101a1e9-8f8b-47b2-afa4-1abd47ea0a87.png</span>
<span class="t" style="left:452.70px;top:729.10px;font-size:18px;line-height:25px;color:#e8503e;transform:scaleX(0.9818);transform-origin:0 50%;">403</span>
<span class="t" style="left:585.90px;top:729.10px;font-size:18px;line-height:25px;color:#e8503e;transform:scaleX(0.9286);transform-origin:0 50%;">xml</span>
<span class="t" style="left:719.20px;top:729.10px;font-size:18px;line-height:25px;color:#e8503e;transform:scaleX(0.9506);transform-origin:0 50%;text-decoration:underline;text-underline-offset:2px;">:65185/__pageframe__/p...</span>
<span class="t" style="left:1011.65px;top:729.10px;font-size:18px;line-height:25px;color:#e8503e;">334 B</span>
<span class="t" style="left:1133.37px;top:729.10px;font-size:18px;line-height:25px;color:#e8503e;">465 ms</span>
<div style="left:0px;top:756.5px;width:1479px;height:32px;background:#242424;"></div>
<svg style="left:12px;top:762.6px;" width="22" height="22" viewBox="0 0 22 22"><rect x="2.500" y="1" width="15" height="18" fill="#f4f4f4" stroke="#b8b8b8" stroke-width="1"/><path d="M1 3.500V21h15" stroke="#d8d8d8" stroke-width="1.500" fill="none"/><rect x="4.500" y="3.500" width="12" height="13" fill="#a9c7f0"/><path d="M4.500 12c2-3 4-4 6-3s4 0 6-1v8.500h-12z" fill="#e8f0fb"/><path d="M3 19c3-5 9-6.500 14-4v6H3z" fill="#4caf50"/></svg>
<span class="t" style="left:36.20px;top:761.10px;font-size:18px;line-height:25px;color:#e8503e;transform:scaleX(0.9898);transform-origin:0 50%;">b544d3ba-a1ae-4d20-a860-81cb5dec9e03.png</span>
<span class="t" style="left:452.70px;top:761.10px;font-size:18px;line-height:25px;color:#e8503e;transform:scaleX(0.9818);transform-origin:0 50%;">403</span>
<span class="t" style="left:585.90px;top:761.10px;font-size:18px;line-height:25px;color:#e8503e;transform:scaleX(0.9286);transform-origin:0 50%;">xml</span>
<span class="t" style="left:719.20px;top:761.10px;font-size:18px;line-height:25px;color:#e8503e;transform:scaleX(0.9506);transform-origin:0 50%;text-decoration:underline;text-underline-offset:2px;">:65185/__pageframe__/p...</span>
<span class="t" style="left:1011.65px;top:761.10px;font-size:18px;line-height:25px;color:#e8503e;">334 B</span>
<span class="t" style="left:1133.37px;top:761.10px;font-size:18px;line-height:25px;color:#e8503e;">486 ms</span>
<div style="left:0px;top:788.5px;width:1479px;height:32px;background:#2a2a2a;"></div>
<svg style="left:12px;top:795.1px;" width="16" height="21" viewBox="0 0 16 21"><rect x="0.500" y="0.500" width="15" height="20" rx="1" fill="#fdfdfd"/></svg>
<svg style="left:12px;top:795.1px;" width="16" height="21" viewBox="0 0 16 21"><circle cx="8" cy="10.500" r="3.800" fill="#fdbf14"/><path d="M6.500 10.500h3M8 9v3" stroke="#5c3f00" stroke-width="0.900"/></svg>
<span class="t" style="left:36.20px;top:793.10px;font-size:18px;line-height:25px;color:#efefef;transform:scaleX(0.9939);transform-origin:0 50%;">btn_add.png</span>
<span class="t" style="left:452.70px;top:793.10px;font-size:18px;line-height:25px;color:#efefef;transform:scaleX(0.9818);transform-origin:0 50%;">304</span>
<span class="t" style="left:585.90px;top:793.10px;font-size:18px;line-height:25px;color:#efefef;transform:scaleX(1.0317);transform-origin:0 50%;">png</span>
<span class="t" style="left:719.20px;top:793.10px;font-size:18px;line-height:25px;color:#efefef;transform:scaleX(0.9918);transform-origin:0 50%;text-decoration:underline;text-underline-offset:2px;">:65185/static/btn_add.p...</span>
<span class="t" style="left:1021.67px;top:793.10px;font-size:18px;line-height:25px;color:#efefef;">90 B</span>
<span class="t" style="left:1153.38px;top:793.10px;font-size:18px;line-height:25px;color:#efefef;">5 ms</span>
<div style="left:0px;top:820.5px;width:1479px;height:32px;background:#242424;"></div>
<svg style="left:12px;top:826.6px;" width="22" height="22" viewBox="0 0 22 22"><rect x="2.500" y="1" width="15" height="18" fill="#f4f4f4" stroke="#b8b8b8" stroke-width="1"/><path d="M1 3.500V21h15" stroke="#d8d8d8" stroke-width="1.500" fill="none"/><rect x="4.500" y="3.500" width="12" height="13" fill="#a9c7f0"/><path d="M4.500 12c2-3 4-4 6-3s4 0 6-1v8.500h-12z" fill="#e8f0fb"/><path d="M3 19c3-5 9-6.500 14-4v6H3z" fill="#4caf50"/></svg>
<span class="t" style="left:36.20px;top:825.10px;font-size:18px;line-height:25px;color:#efefef;">clear.png</span>
<span class="t" style="left:452.70px;top:825.10px;font-size:18px;line-height:25px;color:#efefef;transform:scaleX(0.9818);transform-origin:0 50%;">307</span>
<span class="t" style="left:585.90px;top:825.10px;font-size:18px;line-height:25px;color:#efefef;">/ Redirect</span>
<span class="t" style="left:719.20px;top:825.10px;font-size:18px;line-height:25px;color:#efefef;transform:scaleX(0.9506);transform-origin:0 50%;text-decoration:underline;text-underline-offset:2px;">:65185/__pageframe__/p...</span>
<span class="t" style="left:1031.67px;top:825.10px;font-size:18px;line-height:25px;color:#efefef;">0 B</span>
<span class="t" style="left:1153.38px;top:825.10px;font-size:18px;line-height:25px;color:#efefef;">9 ms</span>
<div style="left:0px;top:852.5px;width:1479px;height:32px;background:#2a2a2a;"></div>
<svg style="left:12px;top:858.6px;" width="22" height="22" viewBox="0 0 22 22"><rect x="2.500" y="1" width="15" height="18" fill="#f4f4f4" stroke="#b8b8b8" stroke-width="1"/><path d="M1 3.500V21h15" stroke="#d8d8d8" stroke-width="1.500" fill="none"/><rect x="4.500" y="3.500" width="12" height="13" fill="#a9c7f0"/><path d="M4.500 12c2-3 4-4 6-3s4 0 6-1v8.500h-12z" fill="#e8f0fb"/><path d="M3 19c3-5 9-6.500 14-4v6H3z" fill="#4caf50"/></svg>
<span class="t" style="left:36.20px;top:857.10px;font-size:18px;line-height:25px;color:#e8503e;transform:scaleX(0.9909);transform-origin:0 50%;">7a55b845-1f2b-41fa-9486-76d187ee9ee1.png</span>
<span class="t" style="left:452.70px;top:857.10px;font-size:18px;line-height:25px;color:#e8503e;transform:scaleX(0.9818);transform-origin:0 50%;">403</span>
<span class="t" style="left:585.90px;top:857.10px;font-size:18px;line-height:25px;color:#e8503e;transform:scaleX(0.9286);transform-origin:0 50%;">xml</span>
<span class="t" style="left:719.20px;top:857.10px;font-size:18px;line-height:25px;color:#e8503e;transform:scaleX(0.9506);transform-origin:0 50%;text-decoration:underline;text-underline-offset:2px;">:65185/__pageframe__/p...</span>
<span class="t" style="left:1011.65px;top:857.10px;font-size:18px;line-height:25px;color:#e8503e;">334 B</span>
<span class="t" style="left:1143.37px;top:857.10px;font-size:18px;line-height:25px;color:#e8503e;">38 ms</span>
<div style="left:0px;top:884.5px;width:1479px;height:32px;background:#242424;"></div>
<svg style="left:12px;top:890.6px;" width="22" height="22" viewBox="0 0 22 22"><rect x="2.500" y="1" width="15" height="18" fill="#f4f4f4" stroke="#b8b8b8" stroke-width="1"/><path d="M1 3.500V21h15" stroke="#d8d8d8" stroke-width="1.500" fill="none"/><rect x="4.500" y="3.500" width="12" height="13" fill="#a9c7f0"/><path d="M4.500 12c2-3 4-4 6-3s4 0 6-1v8.500h-12z" fill="#e8f0fb"/><path d="M3 19c3-5 9-6.500 14-4v6H3z" fill="#4caf50"/></svg>
<span class="t" style="left:36.20px;top:889.10px;font-size:18px;line-height:25px;color:#e8503e;transform:scaleX(0.9843);transform-origin:0 50%;">f5ac8455-4793-450c-97ba-173795c34626.png</span>
<span class="t" style="left:452.70px;top:889.10px;font-size:18px;line-height:25px;color:#e8503e;transform:scaleX(0.9818);transform-origin:0 50%;">403</span>
<span class="t" style="left:585.90px;top:889.10px;font-size:18px;line-height:25px;color:#e8503e;transform:scaleX(0.9286);transform-origin:0 50%;">xml</span>
<span class="t" style="left:719.20px;top:889.10px;font-size:18px;line-height:25px;color:#e8503e;transform:scaleX(0.9506);transform-origin:0 50%;text-decoration:underline;text-underline-offset:2px;">:65185/__pageframe__/p...</span>
<span class="t" style="left:1011.65px;top:889.10px;font-size:18px;line-height:25px;color:#e8503e;">334 B</span>
<span class="t" style="left:1143.37px;top:889.10px;font-size:18px;line-height:25px;color:#e8503e;">30 ms</span>
<div style="left:0px;top:916.5px;width:1479px;height:32px;background:#2a2a2a;"></div>
<svg style="left:12px;top:922.6px;" width="22" height="22" viewBox="0 0 22 22"><rect x="2.500" y="1" width="15" height="18" fill="#f4f4f4" stroke="#b8b8b8" stroke-width="1"/><path d="M1 3.500V21h15" stroke="#d8d8d8" stroke-width="1.500" fill="none"/><rect x="4.500" y="3.500" width="12" height="13" fill="#a9c7f0"/><path d="M4.500 12c2-3 4-4 6-3s4 0 6-1v8.500h-12z" fill="#e8f0fb"/><path d="M3 19c3-5 9-6.500 14-4v6H3z" fill="#4caf50"/></svg>
<span class="t" style="left:36.20px;top:921.10px;font-size:18px;line-height:25px;color:#e8503e;transform:scaleX(0.9857);transform-origin:0 50%;">8cfcc576-4b66-4a09-ac68-ad5b273c2590.png</span>
<span class="t" style="left:452.70px;top:921.10px;font-size:18px;line-height:25px;color:#e8503e;transform:scaleX(0.9818);transform-origin:0 50%;">403</span>
<span class="t" style="left:585.90px;top:921.10px;font-size:18px;line-height:25px;color:#e8503e;transform:scaleX(0.9286);transform-origin:0 50%;">xml</span>
<span class="t" style="left:719.20px;top:921.10px;font-size:18px;line-height:25px;color:#e8503e;transform:scaleX(0.9506);transform-origin:0 50%;text-decoration:underline;text-underline-offset:2px;">:65185/__pageframe__/p...</span>
<span class="t" style="left:1011.65px;top:921.10px;font-size:18px;line-height:25px;color:#e8503e;">334 B</span>
<span class="t" style="left:1143.37px;top:921.10px;font-size:18px;line-height:25px;color:#e8503e;">32 ms</span>
<div style="left:0px;top:948.5px;width:1479px;height:32px;background:#242424;"></div>
<svg style="left:12px;top:955.1px;" width="16" height="21" viewBox="0 0 16 21"><rect x="0.500" y="0.500" width="15" height="20" rx="1" fill="#fdfdfd"/></svg>
<svg style="left:12px;top:955.1px;" width="16" height="21" viewBox="0 0 16 21"><path d="M4.500 8h7v6.500h-7zM3.500 8h9M6.500 6.500h3M7 10v3M9 10v3" stroke="#c4c4c4" stroke-width="0.900" fill="none"/></svg>
<span class="t" style="left:36.20px;top:953.10px;font-size:18px;line-height:25px;color:#efefef;">clear.png</span>
<span class="t" style="left:452.70px;top:953.10px;font-size:18px;line-height:25px;color:#efefef;transform:scaleX(0.9818);transform-origin:0 50%;">304</span>
<span class="t" style="left:585.90px;top:953.10px;font-size:18px;line-height:25px;color:#efefef;transform:scaleX(1.0317);transform-origin:0 50%;">png</span>
<span class="t" style="left:719.20px;top:953.10px;font-size:18px;line-height:25px;color:#efefef;text-decoration:underline;text-underline-offset:2px;">:65185/static/clear.png</span>
<span class="t" style="left:1021.67px;top:953.10px;font-size:18px;line-height:25px;color:#efefef;">90 B</span>
<span class="t" style="left:1153.38px;top:953.10px;font-size:18px;line-height:25px;color:#efefef;">3 ms</span>
</div>
<div style="left:1505.8px;top:423.5px;width:1px;height:1022px;background:#3a3b3d;"></div>
<div style="left:1638.7px;top:423.5px;width:1px;height:1022px;background:#3a3b3d;"></div>
<div style="left:1772.3px;top:423.5px;width:1px;height:1022px;background:#3a3b3d;"></div>
<div style="left:1992.5px;top:423.5px;width:1px;height:1022px;background:#3a3b3d;"></div>
<div style="left:2124.7px;top:423.5px;width:1px;height:1022px;background:#3a3b3d;"></div>
<div style="left:2259px;top:423.5px;width:1px;height:1022px;background:#3a3b3d;"></div>
<div class="clip" style="left:0;top:465px;width:2560px;height:980.500px">
<div style="left:2261px;top:0px;width:1.3px;height:980.5px;background:#b83a2e;"></div>
<div style="left:2374.5px;top:0px;width:1px;height:980.5px;background:#3a3a3a;"></div>
<div style="left:2489px;top:0px;width:1px;height:980.5px;background:#3a3a3a;"></div>
<div style="left:2267.5px;top:-4px;width:3.3px;height:17px;background:#1a9be0;border-radius:1px;"></div>
<div style="left:2267.5px;top:28px;width:3.3px;height:17px;background:#1a9be0;border-radius:1px;"></div>
<div style="left:2267.5px;top:60px;width:3.3px;height:17px;background:#1a9be0;border-radius:1px;"></div>
<div style="left:2267.5px;top:92px;width:3.3px;height:17px;background:#1a9be0;border-radius:1px;"></div>
<div style="left:2267.5px;top:124px;width:3.3px;height:17px;background:#1a9be0;border-radius:1px;"></div>
<div style="left:2267.5px;top:156px;width:3.3px;height:17px;background:#1a9be0;border-radius:1px;"></div>
<div style="left:2267.5px;top:188px;width:3.3px;height:17px;background:#1a9be0;border-radius:1px;"></div>
<div style="left:2269px;top:220px;width:3.3px;height:17px;background:#1a9be0;border-radius:1px;"></div>
<div style="left:2269px;top:252px;width:3.3px;height:17px;background:#1a9be0;border-radius:1px;"></div>
<div style="left:2269px;top:284px;width:3.3px;height:17px;background:#1a9be0;border-radius:1px;"></div>
<div style="left:2269px;top:316px;width:3.3px;height:17px;background:#1a9be0;border-radius:1px;"></div>
<div style="left:2478.5px;top:351.5px;width:2px;height:10px;background:#d0d0d0;border-radius:1px;"></div>
<div style="left:2480px;top:347px;width:25px;height:19px;background:#0acf5b;border-radius:1px;"></div>
<div style="left:2504.5px;top:347px;width:1.5px;height:19px;background:#1a9be0;border-radius:1px;"></div>
<div style="left:2502.5px;top:384px;width:2px;height:9px;background:#c8c8c8;border-radius:1px;"></div>
<div style="left:2504px;top:380px;width:2.5px;height:17px;background:#0acf5b;border-radius:1px;"></div>
<div style="left:2506.3px;top:380px;width:1.2px;height:17px;background:#1a9be0;border-radius:1px;"></div>
<div style="left:2502.5px;top:416px;width:2px;height:9px;background:#c8c8c8;border-radius:1px;"></div>
<div style="left:2504px;top:412px;width:2.5px;height:17px;background:#0acf5b;border-radius:1px;"></div>
<div style="left:2506.3px;top:412px;width:1.2px;height:17px;background:#1a9be0;border-radius:1px;"></div>
<div style="left:2504.5px;top:444px;width:3px;height:17px;background:#1a9be0;border-radius:1px;"></div>
<div style="left:2505.3px;top:543.5px;width:1px;height:10px;background:#b0b0b0;border-radius:1px;"></div>
<div style="left:2503.5px;top:576px;width:3px;height:9px;background:#bfe8e4;border-radius:1px;"></div>
<div style="left:2505.5px;top:575px;width:9px;height:11px;background:#0b9d8f;border-radius:1px;"></div>
<div style="left:2514px;top:573px;width:4.5px;height:15px;background:#1a9be0;border-radius:1px;"></div>
<div style="left:2503.5px;top:608px;width:3px;height:9px;background:#bfe8e4;border-radius:1px;"></div>
<div style="left:2505.5px;top:607px;width:9px;height:11px;background:#0b9d8f;border-radius:1px;"></div>
<div style="left:2514px;top:603px;width:4.5px;height:19px;background:#1a9be0;border-radius:1px;"></div>
<div style="left:2503.5px;top:640px;width:3px;height:9px;background:#bfe8e4;border-radius:1px;"></div>
<div style="left:2505.5px;top:639px;width:9px;height:11px;background:#0b9d8f;border-radius:1px;"></div>
<div style="left:2514px;top:635px;width:4.5px;height:19px;background:#1a9be0;border-radius:1px;"></div>
<div style="left:2504.5px;top:668px;width:3px;height:17px;background:#1a9be0;border-radius:1px;"></div>
<div style="left:2504.5px;top:700px;width:3px;height:17px;background:#1a9be0;border-radius:1px;"></div>
<div style="left:2504.5px;top:736px;width:3px;height:9px;background:#bfe8e4;border-radius:1px;"></div>
<div style="left:2506.5px;top:735px;width:9px;height:11px;background:#0b9d8f;border-radius:1px;"></div>
<div style="left:2515.5px;top:732px;width:2px;height:17px;background:#0acf5b;border-radius:1px;"></div>
<div style="left:2517.3px;top:732px;width:1.3px;height:17px;background:#ffa000;border-radius:1px;"></div>
<div style="left:2504.5px;top:768px;width:3px;height:9px;background:#bfe8e4;border-radius:1px;"></div>
<div style="left:2506.5px;top:767px;width:9px;height:11px;background:#0b9d8f;border-radius:1px;"></div>
<div style="left:2515.5px;top:764px;width:2px;height:17px;background:#0acf5b;border-radius:1px;"></div>
<div style="left:2517.3px;top:764px;width:1.3px;height:17px;background:#ffa000;border-radius:1px;"></div>
<div style="left:2505.5px;top:797px;width:3.5px;height:15px;background:#1a9be0;border-radius:1px;"></div>
<div style="left:2535.5px;top:860px;width:2.5px;height:17px;background:#1a9be0;border-radius:1px;"></div>
<div style="left:2535.5px;top:892px;width:2.5px;height:17px;background:#1a9be0;border-radius:1px;"></div>
<div style="left:2535.5px;top:924px;width:2.5px;height:17px;background:#1a9be0;border-radius:1px;"></div>
<div style="left:2535.5px;top:956px;width:2.5px;height:17px;background:#1a9be0;border-radius:1px;"></div>
</div>
<div style="left:2539px;top:465px;width:21px;height:980.5px;background:#2b2b2b;"></div>
<div style="left:2539px;top:465px;width:1px;height:980.5px;background:#3a3a3a;"></div>
<div style="left:2541px;top:747.5px;width:17px;height:697px;background:#404040;border:1px solid #4c4c4c;"></div>
<div style="left:1060px;top:1445.5px;width:1500px;height:40.5px;background:#292a2d;"></div>
<div style="left:1060px;top:1445px;width:1500px;height:1px;background:#444548;"></div>
<span class="t" style="left:1076.50px;top:1455.00px;font-size:18px;line-height:25px;color:#e2e3e5;transform:scaleX(0.9728);transform-origin:0 50%;">43 requests</span>
<div style="left:1182px;top:1455px;width:1px;height:24px;background:#46474a;"></div>
<span class="t" style="left:1196.60px;top:1455.00px;font-size:18px;line-height:25px;color:#e2e3e5;transform:scaleX(0.9694);transform-origin:0 50%;">8.7 kB transferred</span>
<div style="left:1350px;top:1455px;width:1px;height:24px;background:#46474a;"></div>
<span class="t" style="left:1365.00px;top:1455.00px;font-size:18px;line-height:25px;color:#e2e3e5;transform:scaleX(0.9495);transform-origin:0 50%;">182 kB resources</span>
</div></body></html>
